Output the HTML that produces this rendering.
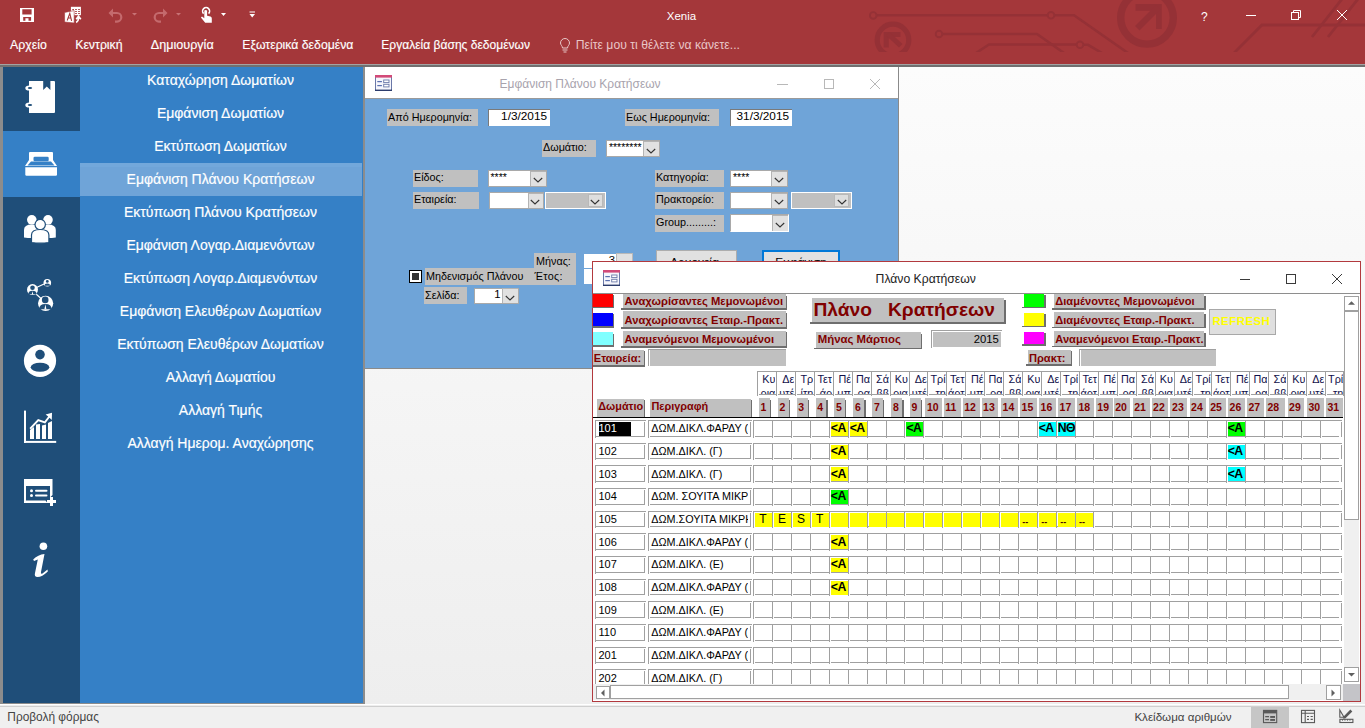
<!DOCTYPE html><html><head><meta charset="utf-8"><style>
html,body{margin:0;padding:0;}
body{width:1365px;height:728px;position:relative;overflow:hidden;background:linear-gradient(to bottom,#fdfdfd 0px,#fcfcfc 67px,#eeeeee 704px,#eeeeee 728px);font-family:"Liberation Sans",sans-serif;}
.t{position:absolute;white-space:nowrap;line-height:1;}
.b{position:absolute;box-sizing:border-box;}
svg{position:absolute;overflow:visible;}
</style></head><body>
<div class="b" style="left:0px;top:0px;width:1365px;height:64px;background:#A4373A"></div>
<svg style="left:0;top:0" width="1365" height="64" viewBox="0 0 1365 64">
<defs><clipPath id="cc"><rect x="0" y="0" width="1365" height="52"/></clipPath></defs>
<g clip-path="url(#cc)">
<g fill="none" stroke="#953136" stroke-width="2.6">
<path d="M876.5 15.3 H1047.5 M1054.5 15.3 H1074 L1128 53"/>
<circle cx="873.2" cy="15.4" r="3.3" stroke-width="1.9"/>
<circle cx="1051" cy="15.3" r="3.3" stroke-width="1.9"/>
<path d="M942.5 34 H1037 L1064 53"/>
<circle cx="939" cy="34" r="3.3" stroke-width="1.9"/>
<path d="M976 53 L989 44.5 H1076.5 M1083.5 44.8 H1088 L1102 53"/>
<circle cx="1080" cy="44.8" r="3.3" stroke-width="1.9"/>
<circle cx="893" cy="40" r="15.8" stroke-width="5.2"/>
<path d="M1234 53 L1262 25 H1365" stroke-width="2.8"/>
<path d="M1312 37 L1342 -1 M1328 37 L1358 -1" stroke-width="2.8"/>
<circle cx="1147" cy="17.8" r="26.3" stroke-width="7.4"/>
</g>
<g fill="#953136">
<path d="M883.7 32 H900.5 V37 H888.8 V47.4 H883.7 Z"/>
<path d="M886 35.5 L889.5 32 L902.5 44 L899 47.5 Z"/>
<path d="M1135.5 4.1 H1161.8 V28.9 H1156 V10.7 H1135.5 Z"/>
<path d="M1135 26 L1156 5 L1160.5 9.5 L1139.5 30.5 Z"/>
</g>
</g>
</svg>
<svg style="left:0;top:0" width="270" height="32" viewBox="0 0 270 32">
<g fill="#fff">
<path d="M20 8 H34 V22 H20 Z M22.3 9.3 V14.5 H31.6 V9.3 Z M23.2 17.1 V20.8 H25.4 V18.3 H28.5 V20.8 H31.1 V17.1 Z" fill-rule="evenodd"/>
</g>
<rect x="70.9" y="6.8" width="10" height="8.4" fill="#fff"/>
<g fill="#A4373A"><rect x="72.3" y="9" width="1.6" height="1"/><rect x="75.2" y="9" width="1.6" height="1"/><rect x="78.2" y="9" width="1.6" height="1"/>
<rect x="72.3" y="11" width="1.6" height="1"/><rect x="75.2" y="11" width="1.6" height="1"/><rect x="78.2" y="11" width="1.6" height="1"/>
<rect x="75.2" y="13" width="1.6" height="1"/><rect x="78.2" y="13" width="1.6" height="1"/></g>
<path d="M64.6 12.4 L74.2 10.6 V23 L64.6 22 Z" fill="#fff" stroke="#A4373A" stroke-width="0.6"/>
<path d="M67.2 20.5 L69.8 13.3 L71.6 20.8 M68.2 18 H71" fill="none" stroke="#A4373A" stroke-width="1.1"/>
<path d="M76.2 22.5 Q78.5 21 78.5 18.5 V17.5 M76.2 19.3 L78.5 16.2 L80.8 19.3" fill="none" stroke="#fff" stroke-width="1.6"/>
<g fill="none" stroke="#c46a6d" stroke-width="2.2">
<path d="M110.5 13 H117 A4.3 4.3 0 0 1 117 21.6 H115"/>
<path d="M165.5 13 H159 A4.3 4.3 0 0 0 159 21.6 H161"/>
</g>
<path d="M108.5 13 L113 8.5 V17.5 Z M167.5 13 L163 8.5 V17.5 Z" fill="#c46a6d"/>
<path d="M132 13 H137 L134.5 15.5 Z M176 13 H181 L178.5 15.5 Z" fill="#c87275"/>
<path d="M221 13 H226 L223.5 16 Z" fill="#fff"/>
<path d="M249.5 11.5 H255 V12.5 H249.5 Z M249.5 14 H255 L252.2 17.5 Z" fill="#fff"/>
<g fill="#fff">
<path d="M203.6 13.6 A3.5 3.5 0 1 1 208.6 13.6" fill="none" stroke="#fff" stroke-width="1.6"/>
<path d="M204.3 10.6 Q205.7 9.4 207.1 10.6 V15.8 L210.5 16.6 Q211.8 17 211.8 18.5 V22.8 H205.2 L200.9 17.6 L202 16.6 L204.3 18.3 Z"/>
</g>
</svg>
<div class="t" style="left:381.50px;width:600px;text-align:center;top:11.37px;font-size:11.5px;color:#fff;font-weight:normal;">Xenia</div>
<svg style="left:1190px;top:0" width="175" height="32" viewBox="1190 0 175 32">
<g stroke="#fff" fill="none" stroke-width="1">
<path d="M1246 15.5 H1256"/>
<rect x="1291.5" y="12.5" width="7" height="7"/>
<path d="M1293.5 12.5 V10.5 H1300.5 V17.5 H1298.5"/>
<path d="M1337 10 L1347 20 M1347 10 L1337 20"/>
</g>
</svg>
<div class="t" style="left:1201.00px;top:10.84px;font-size:12px;color:#fff;font-weight:normal;">?</div>
<div class="t" style="left:10.10px;top:38.89px;font-size:12.3px;color:#fff;font-weight:normal;-webkit-text-stroke:0.15px #fff">Αρχείο</div>
<div class="t" style="left:75.20px;top:38.89px;font-size:12.3px;color:#fff;font-weight:normal;-webkit-text-stroke:0.15px #fff">Κεντρική</div>
<div class="t" style="left:150.80px;top:38.63px;font-size:12.6px;color:#fff;font-weight:normal;-webkit-text-stroke:0.15px #fff">Δημιουργία</div>
<div class="t" style="left:242.30px;top:38.93px;font-size:12.25px;color:#fff;font-weight:normal;-webkit-text-stroke:0.15px #fff">Εξωτερικά δεδομένα</div>
<div class="t" style="left:381.30px;top:39.10px;font-size:12.05px;color:#fff;font-weight:normal;-webkit-text-stroke:0.15px #fff">Εργαλεία βάσης δεδομένων</div>
<svg style="left:555px;top:35px" width="20" height="20" viewBox="555 35 20 20">
<path d="M565 38.5 A4.5 4.5 0 0 1 569.5 43 C569.5 45 567.5 46 567.5 48 H562.5 C562.5 46 560.5 45 560.5 43 A4.5 4.5 0 0 1 565 38.5 Z" fill="none" stroke="#e8c8c8" stroke-width="1"/>
<path d="M562.5 50 H567.5 M563.5 52 H566.5" stroke="#e8c8c8" stroke-width="1"/>
</svg>
<div class="t" style="left:575.80px;top:38.97px;font-size:12.2px;color:#e9c6c7;font-weight:normal;">Πείτε μου τι θέλετε να κάνετε...</div>
<div class="b" style="left:0px;top:64px;width:1365px;height:1px;background:#a3a3a3"></div>
<div class="b" style="left:0px;top:65px;width:1365px;height:2px;background:#707070"></div>
<div class="b" style="left:0px;top:67px;width:3px;height:637px;background:#8c8c8c"></div>
<div class="b" style="left:3px;top:67px;width:77px;height:636px;background:#1F4E79"></div>
<div class="b" style="left:3px;top:131px;width:77px;height:66px;background:#3580C6"></div>
<div class="b" style="left:80px;top:67px;width:283px;height:636px;background:#3580C6"></div>
<div class="b" style="left:80px;top:163px;width:282px;height:33px;background:#6FA4D8"></div>
<div class="b" style="left:80px;top:163px;width:282px;height:4px;background:#73A8DB"></div>
<div class="b" style="left:363px;top:67px;width:2px;height:637px;background:#8c8c8c"></div>
<div class="b" style="left:0px;top:703px;width:365px;height:1px;background:#8c8c8c"></div>
<div class="t" style="left:-79.50px;width:600px;text-align:center;top:72.55px;font-size:14px;color:#fff;font-weight:normal;-webkit-text-stroke:0.18px #fff">Καταχώρηση Δωματίων</div>
<div class="t" style="left:-79.50px;width:600px;text-align:center;top:105.55px;font-size:14px;color:#fff;font-weight:normal;-webkit-text-stroke:0.18px #fff">Εμφάνιση Δωματίων</div>
<div class="t" style="left:-79.50px;width:600px;text-align:center;top:138.55px;font-size:14px;color:#fff;font-weight:normal;-webkit-text-stroke:0.18px #fff">Εκτύπωση Δωματίων</div>
<div class="t" style="left:-79.50px;width:600px;text-align:center;top:171.55px;font-size:14px;color:#fff;font-weight:normal;-webkit-text-stroke:0.18px #fff">Εμφάνιση Πλάνου Κρατήσεων</div>
<div class="t" style="left:-79.50px;width:600px;text-align:center;top:204.55px;font-size:14px;color:#fff;font-weight:normal;-webkit-text-stroke:0.18px #fff">Εκτύπωση Πλάνου Κρατήσεων</div>
<div class="t" style="left:-79.50px;width:600px;text-align:center;top:237.55px;font-size:14px;color:#fff;font-weight:normal;-webkit-text-stroke:0.18px #fff">Εμφάνιση Λογαρ.Διαμενόντων</div>
<div class="t" style="left:-79.50px;width:600px;text-align:center;top:270.55px;font-size:14px;color:#fff;font-weight:normal;-webkit-text-stroke:0.18px #fff">Εκτύπωση Λογαρ.Διαμενόντων</div>
<div class="t" style="left:-79.50px;width:600px;text-align:center;top:303.55px;font-size:14px;color:#fff;font-weight:normal;-webkit-text-stroke:0.18px #fff">Εμφάνιση Ελευθέρων Δωματίων</div>
<div class="t" style="left:-79.50px;width:600px;text-align:center;top:336.55px;font-size:14px;color:#fff;font-weight:normal;-webkit-text-stroke:0.18px #fff">Εκτύπωση Ελευθέρων Δωματίων</div>
<div class="t" style="left:-79.50px;width:600px;text-align:center;top:369.55px;font-size:14px;color:#fff;font-weight:normal;-webkit-text-stroke:0.18px #fff">Αλλαγή Δωματίου</div>
<div class="t" style="left:-79.50px;width:600px;text-align:center;top:402.55px;font-size:14px;color:#fff;font-weight:normal;-webkit-text-stroke:0.18px #fff">Αλλαγή Τιμής</div>
<div class="t" style="left:-79.50px;width:600px;text-align:center;top:435.55px;font-size:14px;color:#fff;font-weight:normal;-webkit-text-stroke:0.18px #fff">Αλλαγή Ημερομ. Αναχώρησης</div>
<svg style="left:0;top:67px" width="80" height="560" viewBox="0 67 80 560">
<g fill="#fff">
<!-- notebook -->
<path fill-rule="evenodd" d="M29 81 H54 Q55 81 55 82 V112 Q55 113 54 113 H29 Z M43.2 81 V90 L46.8 86.5 L50.4 90 V81 Z"/>
<ellipse cx="29.5" cy="88" rx="4.2" ry="2.6"/><ellipse cx="29.5" cy="105" rx="4.2" ry="2.6"/>
</g>
<g fill="#1F4E79"><ellipse cx="30" cy="88" rx="2.2" ry="1"/><ellipse cx="30" cy="105" rx="2.2" ry="1"/></g>
<!-- bed -->
<g fill="#fff">
<path d="M30 152 H52 Q53 152 53 153 V160 L57 166 H25 L29 160 V153 Q29 152 30 152 Z"/>
<path d="M25.3 167.3 H57 V174.5 Q57 175.7 55.8 175.7 H26.5 Q25.3 175.7 25.3 174.5 Z"/>
</g>
<rect x="33.5" y="156.8" width="15.2" height="4.4" rx="1.3" fill="#3580C6"/>
<path d="M31 161.5 H51 L54.5 165.5 H27.5 Z" fill="#3580C6"/>
<!-- people -->
<g fill="#fff">
<circle cx="31.8" cy="219.8" r="4.8"/><circle cx="48" cy="219.8" r="4.8"/>
<path d="M24 237.5 V230 Q24 224.5 31.8 224.5 Q39.6 224.5 39.6 230 V237.5 Q31.8 238.5 24 237.5 Z"/>
<path d="M40.2 237.5 V230 Q40.2 224.5 48 224.5 Q55.8 224.5 55.8 230 V237.5 Q48 238.5 40.2 237.5 Z"/>
</g>
<g fill="#fff" stroke="#1F4E79" stroke-width="1.2">
<circle cx="40.2" cy="224.6" r="5.2"/>
<path d="M31.5 242.5 V235 Q31.5 229.5 40.2 229.5 Q48.9 229.5 48.9 235 V242.5 Q40.2 243.8 31.5 242.5 Z"/>
</g>
<!-- network -->
<g stroke="#fff" stroke-width="1.1"><path d="M36.5 287.5 L44 284 M35.5 293.5 L41 298.5"/></g>
<g fill="#fff"><circle cx="47.3" cy="282.7" r="3.8"/><circle cx="32.5" cy="289.6" r="5.5"/><circle cx="45.6" cy="303.3" r="7.6"/></g>
<g fill="#1F4E79">
<circle cx="47.3" cy="281.4" r="1.4"/><path d="M44.6 285.8 Q44.6 283.5 47.3 283.5 Q50 283.5 50 285.8 Z"/>
<circle cx="32.5" cy="287.8" r="2.3"/><path d="M28.4 294.2 Q28.4 290.8 32.5 290.8 Q36.6 290.8 36.6 294.2 Z"/>
<circle cx="45.2" cy="299.9" r="3.3"/><path d="M39.2 309.2 Q39.2 304 45.4 304 Q51.6 304 51.6 309.2 Z"/>
</g>
<g fill="#fff"><path d="M45.4 304.3 L44.4 309.3 H46.4 Z"/><path d="M32.5 291 L31.8 294.3 H33.2 Z"/></g>
<!-- user -->
<circle cx="40" cy="360.8" r="16.1" fill="#fff"/>
<circle cx="40" cy="354.6" r="4.8" fill="#1F4E79"/>
<ellipse cx="40" cy="367.3" rx="9.3" ry="4.5" fill="#1F4E79"/>
<!-- chart -->
<g fill="#fff">
<rect x="24" y="410.6" width="2" height="32.3"/><rect x="24" y="440.9" width="32.2" height="2"/>
<path d="M30 439 V430 L34 427 V439 Z"/><path d="M36 439 V424.5 L40 424 V439 Z"/><path d="M42 439 V425.5 L46 424.5 V439 Z"/><path d="M48 439 V423 L52 421 V439 Z"/>
<path d="M52 412.7 L51.8 420 L49.5 417.8 L45.2 423.5 L38.5 421.2 L30.8 429.5 L29.5 428 L38 419 L44.5 421.2 L48.2 416.5 L45.6 414.5 Z"/>
</g>
<!-- form plus -->
<g fill="#fff">
<path d="M24 479 H52.5 V495 L50 497.5 V486 H26 V500.5 H45.5 L47.5 503 H24 Z"/>
<circle cx="31.5" cy="490.8" r="1.5"/><circle cx="31.5" cy="495.6" r="1.5"/>
<rect x="35" y="489.8" width="12.5" height="2" rx="1"/><rect x="35" y="494.6" width="12.5" height="2" rx="1"/>
<path d="M50 497 H53 V500 H56 V503 H53 V506 H50 V503 H47 V500 H50 Z"/>
</g>
<!-- info -->
<g fill="#fff">
<circle cx="43.4" cy="546.3" r="3.8"/>
<path d="M33.2 559.5 Q38 554.5 44.5 554 L41 572 Q40.5 574.5 42.5 573.5 L47.5 569.5 L47.8 571.5 Q42 577 37.5 577 Q34 577 35 573 L37.8 559.5 L34 561 Z"/>
</g>
</svg>
<div class="b" style="left:365px;top:67px;width:533px;height:31px;background:#fff"></div>
<div class="b" style="left:365px;top:98px;width:533px;height:1px;background:#9a9a9a"></div>
<div class="b" style="left:365px;top:99px;width:533px;height:269px;background:#6FA4D8"></div>
<div class="b" style="left:898px;top:67px;width:1px;height:302px;background:#8a8a8a"></div>
<div class="b" style="left:365px;top:368px;width:534px;height:1px;background:#8a8a8a"></div>
<svg style="left:375px;top:75px" width="17" height="16" viewBox="0 0 17 16">
<rect x="0.5" y="0.5" width="16" height="15" fill="#f6f6fc" stroke="#6a78a8" stroke-width="1"/>
<rect x="0" y="0" width="17" height="2.6" fill="#d24a78"/>
<rect x="2.3" y="6" width="4.6" height="1.2" fill="#5a70b0"/><rect x="2.3" y="10" width="4.6" height="1.2" fill="#5a70b0"/>
<rect x="8.7" y="5" width="5.3" height="2.6" fill="#fff" stroke="#6a78a8" stroke-width="0.9"/><rect x="8.7" y="9.3" width="5.3" height="2.6" fill="#fff" stroke="#6a78a8" stroke-width="0.9"/>
<rect x="0" y="14.6" width="17" height="1.4" fill="#2c3c6c"/>
</svg>
<div class="t" style="left:499.60px;top:78.44px;font-size:12px;color:#a8a3ad;font-weight:normal;">Εμφάνιση Πλάνου Κρατήσεων</div>
<svg style="left:760px;top:70px" width="130" height="25" viewBox="760 70 130 25">
<g stroke="#b8b8b8" fill="none" stroke-width="1">
<path d="M777 84.5 H788"/>
<rect x="824.5" y="79.5" width="9" height="9"/>
<path d="M870 79 L880 89 M880 79 L870 89"/>
</g></svg>
<div class="b" style="left:387px;top:109px;width:91px;height:17px;background:#C0C0C0"></div>
<div class="t" style="left:388.00px;top:111.56px;font-size:10.8px;color:#000;font-weight:normal;">Από Ημερομηνία:</div>
<div class="b" style="left:488px;top:109px;width:62px;height:17px;background:#fff;border-top:1px solid #7a7a7a;border-left:1px solid #7a7a7a"></div>
<div class="t" style="left:-53.00px;width:600px;text-align:right;top:111.01px;font-size:11.8px;color:#000;font-weight:normal;">1/3/2015</div>
<div class="b" style="left:625px;top:109px;width:94px;height:17px;background:#C0C0C0"></div>
<div class="t" style="left:626.00px;top:111.96px;font-size:10.8px;color:#000;font-weight:normal;">Εως Ημερομηνία:</div>
<div class="b" style="left:730px;top:109px;width:62px;height:17px;background:#fff;border-top:1px solid #7a7a7a;border-left:1px solid #7a7a7a"></div>
<div class="t" style="left:189.00px;width:600px;text-align:right;top:111.01px;font-size:11.8px;color:#000;font-weight:normal;">31/3/2015</div>
<div class="b" style="left:542px;top:140px;width:54px;height:17px;background:#C0C0C0"></div>
<div class="t" style="left:543.00px;top:142.26px;font-size:10.8px;color:#000;font-weight:normal;">Δωμάτιο:</div>
<div class="b" style="left:606px;top:140px;width:54px;height:17px;background:#fff;border:1px solid #a9a9a9"></div>
<div class="b" style="left:643px;top:141px;width:16px;height:15px;background:#e1e1e1;border-left:1px solid #b4b4b4;border-top:1px solid #b4b4b4"></div>
<svg style="left:644.7px;top:146.5px" width="12" height="8" viewBox="0 0 12 8"><path d="M1.8 2 L6 6 L10.2 2" fill="none" stroke="#333" stroke-width="1.1"/></svg>
<div class="t" style="left:608.90px;top:142.21px;font-size:10.5px;color:#000;font-weight:normal;">********</div>
<div class="b" style="left:413px;top:170px;width:65px;height:17px;background:#C0C0C0"></div>
<div class="t" style="left:414.00px;top:172.26px;font-size:10.8px;color:#000;font-weight:normal;">Είδος:</div>
<div class="b" style="left:488px;top:170px;width:59px;height:17px;background:#fff;border:1px solid #a9a9a9"></div>
<div class="b" style="left:530px;top:171px;width:16px;height:15px;background:#e1e1e1;border-left:1px solid #b4b4b4;border-top:1px solid #b4b4b4"></div>
<svg style="left:531.8px;top:176.4px" width="12" height="8" viewBox="0 0 12 8"><path d="M1.8 2 L6 6 L10.2 2" fill="none" stroke="#333" stroke-width="1.1"/></svg>
<div class="t" style="left:490.50px;top:172.21px;font-size:10.5px;color:#000;font-weight:normal;">****</div>
<div class="b" style="left:413px;top:192px;width:66px;height:17px;background:#C0C0C0"></div>
<div class="t" style="left:414.00px;top:194.26px;font-size:10.8px;color:#000;font-weight:normal;">Εταιρεία:</div>
<div class="b" style="left:489px;top:192px;width:55px;height:17px;background:#fff;border:1px solid #a9a9a9"></div>
<div class="b" style="left:528px;top:193px;width:15px;height:15px;background:#e1e1e1;border-left:1px solid #b4b4b4;border-top:1px solid #b4b4b4"></div>
<svg style="left:529.45px;top:198.3px" width="12" height="8" viewBox="0 0 12 8"><path d="M1.8 2 L6 6 L10.2 2" fill="none" stroke="#333" stroke-width="1.1"/></svg>
<div class="b" style="left:545px;top:192px;width:61px;height:17px;background:#fff"></div>
<div class="b" style="left:546px;top:193px;width:59px;height:15px;background:#c0c0c0"></div>
<div class="b" style="left:588px;top:194px;width:15px;height:13px;background:#dedede;border:1px solid #b9b9b9"></div>
<svg style="left:589.3px;top:198.3px" width="12" height="8" viewBox="0 0 12 8"><path d="M1.8 2 L6 6 L10.2 2" fill="none" stroke="#333" stroke-width="1.1"/></svg>
<div class="b" style="left:655px;top:170px;width:69px;height:17px;background:#C0C0C0"></div>
<div class="t" style="left:656.00px;top:172.26px;font-size:10.8px;color:#000;font-weight:normal;">Κατηγορία:</div>
<div class="b" style="left:730px;top:170px;width:58px;height:17px;background:#fff;border:1px solid #a9a9a9"></div>
<div class="b" style="left:771px;top:171px;width:16px;height:15px;background:#e1e1e1;border-left:1px solid #b4b4b4;border-top:1px solid #b4b4b4"></div>
<svg style="left:773.3px;top:176.4px" width="12" height="8" viewBox="0 0 12 8"><path d="M1.8 2 L6 6 L10.2 2" fill="none" stroke="#333" stroke-width="1.1"/></svg>
<div class="t" style="left:733.00px;top:172.21px;font-size:10.5px;color:#000;font-weight:normal;">****</div>
<div class="b" style="left:655px;top:192px;width:69px;height:17px;background:#C0C0C0"></div>
<div class="t" style="left:656.00px;top:194.26px;font-size:10.8px;color:#000;font-weight:normal;">Πρακτορείο:</div>
<div class="b" style="left:730px;top:192px;width:58px;height:17px;background:#fff;border:1px solid #a9a9a9"></div>
<div class="b" style="left:771px;top:193px;width:16px;height:15px;background:#e1e1e1;border-left:1px solid #b4b4b4;border-top:1px solid #b4b4b4"></div>
<svg style="left:773.3px;top:198.3px" width="12" height="8" viewBox="0 0 12 8"><path d="M1.8 2 L6 6 L10.2 2" fill="none" stroke="#333" stroke-width="1.1"/></svg>
<div class="b" style="left:791px;top:192px;width:61px;height:17px;background:#fff"></div>
<div class="b" style="left:792px;top:193px;width:59px;height:15px;background:#c0c0c0"></div>
<div class="b" style="left:834px;top:194px;width:15px;height:13px;background:#dedede;border:1px solid #b9b9b9"></div>
<svg style="left:835.5px;top:198.3px" width="12" height="8" viewBox="0 0 12 8"><path d="M1.8 2 L6 6 L10.2 2" fill="none" stroke="#333" stroke-width="1.1"/></svg>
<div class="b" style="left:655px;top:215px;width:69px;height:17px;background:#C0C0C0"></div>
<div class="t" style="left:656.00px;top:217.26px;font-size:10.8px;color:#000;font-weight:normal;">Group.........:</div>
<div class="b" style="left:730px;top:214px;width:59px;height:18px;background:#fff;border:1px solid #a9a9a9;border-right-color:#fff;border-bottom-color:#fff"></div>
<div class="b" style="left:772px;top:215px;width:16px;height:16px;background:#e1e1e1;border-left:1px solid #b4b4b4;border-top:1px solid #b4b4b4"></div>
<svg style="left:774.0px;top:221.2px" width="12" height="8" viewBox="0 0 12 8"><path d="M1.8 2 L6 6 L10.2 2" fill="none" stroke="#333" stroke-width="1.1"/></svg>
<div class="b" style="left:409px;top:270px;width:13px;height:13px;background:#fff;border:1px solid #000"></div>
<div class="b" style="left:412px;top:273px;width:7px;height:7px;background:#333"></div>
<div class="b" style="left:425px;top:268px;width:110px;height:17px;background:#C0C0C0"></div>
<div class="t" style="left:426.00px;top:271.26px;font-size:10.8px;color:#000;font-weight:normal;">Μηδενισμός Πλάνου</div>
<div class="b" style="left:534px;top:253px;width:42px;height:32px;background:#C0C0C0"></div>
<div class="t" style="left:536.00px;top:256.16px;font-size:10.8px;color:#000;font-weight:normal;">Μήνας:</div>
<div class="t" style="left:534.50px;top:270.66px;font-size:10.8px;color:#000;font-weight:normal;letter-spacing:0.3px">Έτος:</div>
<div class="b" style="left:424px;top:287px;width:43px;height:17px;background:#C0C0C0"></div>
<div class="t" style="left:425.00px;top:290.26px;font-size:10.8px;color:#000;font-weight:normal;">Σελίδα:</div>
<div class="b" style="left:474px;top:288px;width:45px;height:16px;background:#fff;border:1px solid #a9a9a9"></div>
<div class="b" style="left:502px;top:288px;width:16px;height:15px;background:#e1e1e1;border-left:1px solid #b4b4b4;border-top:1px solid #b4b4b4"></div>
<svg style="left:504.4px;top:293.55px" width="12" height="8" viewBox="0 0 12 8"><path d="M1.8 2 L6 6 L10.2 2" fill="none" stroke="#333" stroke-width="1.1"/></svg>
<div class="t" style="left:-99.50px;width:600px;text-align:right;top:289.43px;font-size:11.3px;color:#000;font-weight:normal;">1</div>
<div class="b" style="left:584px;top:254px;width:33px;height:14px;background:#fff"></div>
<div class="b" style="left:616px;top:253px;width:17px;height:16px;background:#e1e1e1;border:1px solid #b9b9b9"></div>
<div class="t" style="left:15.00px;width:600px;text-align:right;top:255.23px;font-size:11.3px;color:#000;font-weight:normal;">3</div>
<div class="b" style="left:584px;top:269px;width:33px;height:15px;background:#fff"></div>
<div class="b" style="left:656px;top:250px;width:81px;height:22px;background:#e1e1e1;border:1px solid #adadad"></div>
<div class="t" style="left:394.50px;width:600px;text-align:center;top:257.01px;font-size:11.8px;color:#000;font-weight:normal;">Αρμονεία</div>
<div class="b" style="left:762px;top:250px;width:78px;height:22px;background:#e1e1e1;border:2px solid #0078d7"></div>
<div class="t" style="left:501.00px;width:600px;text-align:center;top:257.01px;font-size:11.8px;color:#000;font-weight:normal;">Εμφάνιση</div>
<div class="b" style="left:592px;top:261px;width:769px;height:441px;background:#fff;border:1px solid #B2393E"></div>
<div class="b" style="left:593px;top:293px;width:767px;height:1px;background:#8e8e8e"></div>
<svg style="left:603px;top:270px" width="17" height="16" viewBox="0 0 17 16">
<rect x="0.5" y="0.5" width="16" height="15" fill="#f6f6fc" stroke="#6a78a8" stroke-width="1"/>
<rect x="0" y="0" width="17" height="2.6" fill="#d24a78"/>
<rect x="2.3" y="6" width="4.6" height="1.2" fill="#5a70b0"/><rect x="2.3" y="10" width="4.6" height="1.2" fill="#5a70b0"/>
<rect x="8.7" y="5" width="5.3" height="2.6" fill="#fff" stroke="#6a78a8" stroke-width="0.9"/><rect x="8.7" y="9.3" width="5.3" height="2.6" fill="#fff" stroke="#6a78a8" stroke-width="0.9"/>
<rect x="0" y="14.6" width="17" height="1.4" fill="#2c3c6c"/>
</svg>
<div class="t" style="left:875.60px;top:272.77px;font-size:12.2px;color:#222;font-weight:normal;">Πλάνο Κρατήσεων</div>
<svg style="left:1230px;top:265px" width="125" height="25" viewBox="1230 265 125 25">
<g stroke="#3a3a3a" fill="none" stroke-width="1">
<path d="M1240 279.5 H1250"/>
<rect x="1286.5" y="274.5" width="9" height="9"/>
<path d="M1332 274 L1342 284 M1342 274 L1332 284"/>
</g></svg>
<div class="b" style="left:593px;top:294px;width:20px;height:13px;background:#FF0000"></div>
<div class="b" style="left:613px;top:295px;width:1px;height:13px;background:#6e6e6e"></div>
<div class="b" style="left:592px;top:307px;width:22px;height:1px;background:#6e6e6e"></div>
<div class="b" style="left:593px;top:313px;width:20px;height:13px;background:#0000FF"></div>
<div class="b" style="left:613px;top:314px;width:1px;height:14px;background:#6e6e6e"></div>
<div class="b" style="left:592px;top:326px;width:22px;height:2px;background:#6e6e6e"></div>
<div class="b" style="left:593px;top:332px;width:20px;height:13px;background:#80FFFF"></div>
<div class="b" style="left:613px;top:334px;width:1px;height:13px;background:#6e6e6e"></div>
<div class="b" style="left:592px;top:345px;width:22px;height:2px;background:#6e6e6e"></div>
<div class="b" style="left:623px;top:294px;width:163px;height:14px;background:#C0C0C0"></div>
<div class="b" style="left:786px;top:296px;width:1px;height:14px;background:#6e6e6e"></div>
<div class="b" style="left:621px;top:308px;width:166px;height:2px;background:#6e6e6e"></div>
<div class="t" style="left:624.60px;top:296.12px;font-size:11.2px;color:#800000;font-weight:bold;">Αναχωρίσαντες Μεμονωμένοι</div>
<div class="b" style="left:623px;top:311px;width:163px;height:16px;background:#C0C0C0"></div>
<div class="b" style="left:786px;top:313px;width:1px;height:16px;background:#6e6e6e"></div>
<div class="b" style="left:621px;top:327px;width:166px;height:2px;background:#6e6e6e"></div>
<div class="t" style="left:624.60px;top:315.12px;font-size:11.2px;color:#800000;font-weight:bold;">Αναχωρίσαντες Εταιρ.-Πρακτ.</div>
<div class="b" style="left:623px;top:331px;width:163px;height:15px;background:#C0C0C0"></div>
<div class="b" style="left:786px;top:332px;width:1px;height:16px;background:#6e6e6e"></div>
<div class="b" style="left:621px;top:346px;width:166px;height:2px;background:#6e6e6e"></div>
<div class="t" style="left:624.60px;top:334.12px;font-size:11.2px;color:#800000;font-weight:bold;">Αναμενόμενοι Μεμονωμένοι</div>
<div class="b" style="left:593px;top:350px;width:51px;height:15px;background:#C0C0C0"></div>
<div class="b" style="left:644px;top:351px;width:1px;height:16px;background:#6e6e6e"></div>
<div class="b" style="left:593px;top:365px;width:52px;height:2px;background:#6e6e6e"></div>
<div class="t" style="left:593.80px;top:352.69px;font-size:11px;color:#800000;font-weight:bold;">Εταιρεία:</div>
<div class="b" style="left:648px;top:349px;width:138px;height:1px;background:#a0a0a0"></div>
<div class="b" style="left:648px;top:349px;width:1px;height:17px;background:#a0a0a0"></div>
<div class="b" style="left:650px;top:350px;width:136px;height:16px;background:#c0c0c0"></div>
<div class="b" style="left:812px;top:298px;width:192px;height:24px;background:#C0C0C0"></div>
<div class="b" style="left:1004px;top:300px;width:2px;height:24px;background:#6e6e6e"></div>
<div class="b" style="left:810px;top:322px;width:196px;height:2px;background:#6e6e6e"></div>
<div class="t" style="left:813.50px;top:300.35px;font-size:19.2px;color:#800000;font-weight:bold;">Πλάνο&nbsp;&nbsp; Κρατήσεων</div>
<div class="b" style="left:816px;top:332px;width:105px;height:16px;background:#C0C0C0"></div>
<div class="b" style="left:921px;top:334px;width:1px;height:15px;background:#6e6e6e"></div>
<div class="b" style="left:814px;top:348px;width:108px;height:1px;background:#6e6e6e"></div>
<div class="t" style="left:817.70px;top:333.95px;font-size:11.4px;color:#800000;font-weight:bold;">Μήνας Μάρτιος</div>
<div class="b" style="left:931px;top:330px;width:71px;height:1px;background:#a0a0a0"></div>
<div class="b" style="left:931px;top:330px;width:1px;height:18px;background:#a0a0a0"></div>
<div class="b" style="left:933px;top:332px;width:68px;height:15px;background:#c0c0c0"></div>
<div class="t" style="left:398.80px;width:600px;text-align:right;top:334.23px;font-size:11.3px;color:#000;font-weight:normal;">2015</div>
<div class="b" style="left:1024px;top:294px;width:20px;height:13px;background:#00FF00"></div>
<div class="b" style="left:1044px;top:295px;width:2px;height:13px;background:#6e6e6e"></div>
<div class="b" style="left:1022px;top:307px;width:24px;height:1px;background:#6e6e6e"></div>
<div class="b" style="left:1024px;top:313px;width:20px;height:13px;background:#FFFF00"></div>
<div class="b" style="left:1044px;top:314px;width:2px;height:13px;background:#6e6e6e"></div>
<div class="b" style="left:1022px;top:326px;width:24px;height:1px;background:#6e6e6e"></div>
<div class="b" style="left:1024px;top:332px;width:20px;height:12px;background:#FF00FF"></div>
<div class="b" style="left:1044px;top:333px;width:2px;height:13px;background:#6e6e6e"></div>
<div class="b" style="left:1022px;top:344px;width:24px;height:2px;background:#6e6e6e"></div>
<div class="b" style="left:1054px;top:294px;width:150px;height:14px;background:#C0C0C0"></div>
<div class="b" style="left:1204px;top:296px;width:2px;height:14px;background:#6e6e6e"></div>
<div class="b" style="left:1052px;top:308px;width:154px;height:2px;background:#6e6e6e"></div>
<div class="t" style="left:1055.30px;top:296.20px;font-size:11.1px;color:#800000;font-weight:bold;">Διαμένοντες Μεμονωμένοι</div>
<div class="b" style="left:1054px;top:312px;width:150px;height:15px;background:#C0C0C0"></div>
<div class="b" style="left:1204px;top:314px;width:2px;height:14px;background:#6e6e6e"></div>
<div class="b" style="left:1052px;top:327px;width:154px;height:1px;background:#6e6e6e"></div>
<div class="t" style="left:1055.30px;top:314.70px;font-size:11.1px;color:#800000;font-weight:bold;">Διαμένοντες Εταιρ.-Πρακτ.</div>
<div class="b" style="left:1054px;top:331px;width:150px;height:15px;background:#C0C0C0"></div>
<div class="b" style="left:1204px;top:333px;width:2px;height:14px;background:#6e6e6e"></div>
<div class="b" style="left:1052px;top:346px;width:154px;height:1px;background:#6e6e6e"></div>
<div class="t" style="left:1055.30px;top:333.90px;font-size:11.1px;color:#800000;font-weight:bold;">Αναμενόμενοι Εταιρ.-Πρακτ.</div>
<div class="b" style="left:1028px;top:350px;width:43px;height:14px;background:#C0C0C0"></div>
<div class="b" style="left:1071px;top:351px;width:1px;height:15px;background:#6e6e6e"></div>
<div class="b" style="left:1026px;top:364px;width:46px;height:2px;background:#6e6e6e"></div>
<div class="t" style="left:1029.00px;top:352.60px;font-size:11.1px;color:#800000;font-weight:bold;">Πρακτ:</div>
<div class="b" style="left:1079px;top:349px;width:137px;height:1px;background:#a0a0a0"></div>
<div class="b" style="left:1079px;top:349px;width:1px;height:17px;background:#a0a0a0"></div>
<div class="b" style="left:1081px;top:350px;width:135px;height:16px;background:#c0c0c0"></div>
<div class="b" style="left:1209px;top:309px;width:67px;height:26px;background:#dfdfdf;border:1px solid #a8a8a8"></div>
<div class="t" style="left:1212.40px;top:316.35px;font-size:11.4px;color:#FFFF00;font-weight:bold;letter-spacing:0.5px">REFRESH</div>
<div class="b" style="left:757px;top:371px;width:586px;height:1px;background:#a0a0a0"></div>
<div class="b" style="left:757px;top:371px;width:1px;height:25px;background:#a0a0a0"></div>
<div class="b" style="left:759px;top:394px;width:17px;height:1px;background:#a0a0a0"></div>
<div class="t" style="left:760.30px;top:373.1px;width:15px;height:20.7px;overflow:hidden;white-space:normal;word-break:break-all;text-align:right;font-size:10.8px;line-height:13.7px;color:#10104a">Κυριακή</div>
<div class="b" style="left:776px;top:371px;width:1px;height:25px;background:#a0a0a0"></div>
<div class="b" style="left:778px;top:394px;width:17px;height:1px;background:#a0a0a0"></div>
<div class="t" style="left:779.23px;top:373.1px;width:15px;height:20.7px;overflow:hidden;white-space:normal;word-break:break-all;text-align:right;font-size:10.8px;line-height:13.7px;color:#10104a">Δευτέρα</div>
<div class="b" style="left:795px;top:371px;width:1px;height:25px;background:#a0a0a0"></div>
<div class="b" style="left:797px;top:394px;width:17px;height:1px;background:#a0a0a0"></div>
<div class="t" style="left:798.16px;top:373.1px;width:15px;height:20.7px;overflow:hidden;white-space:normal;word-break:break-all;text-align:right;font-size:10.8px;line-height:13.7px;color:#10104a">Τρίτη</div>
<div class="b" style="left:814px;top:371px;width:1px;height:25px;background:#a0a0a0"></div>
<div class="b" style="left:816px;top:394px;width:17px;height:1px;background:#a0a0a0"></div>
<div class="t" style="left:817.09px;top:373.1px;width:15px;height:20.7px;overflow:hidden;white-space:normal;word-break:break-all;text-align:right;font-size:10.8px;line-height:13.7px;color:#10104a">Τετάρτη</div>
<div class="b" style="left:833px;top:371px;width:1px;height:25px;background:#a0a0a0"></div>
<div class="b" style="left:835px;top:394px;width:17px;height:1px;background:#a0a0a0"></div>
<div class="t" style="left:836.02px;top:373.1px;width:15px;height:20.7px;overflow:hidden;white-space:normal;word-break:break-all;text-align:right;font-size:10.8px;line-height:13.7px;color:#10104a">Πέμπτη</div>
<div class="b" style="left:852px;top:371px;width:1px;height:25px;background:#a0a0a0"></div>
<div class="b" style="left:854px;top:394px;width:17px;height:1px;background:#a0a0a0"></div>
<div class="t" style="left:854.95px;top:373.1px;width:15px;height:20.7px;overflow:hidden;white-space:normal;word-break:break-all;text-align:right;font-size:10.8px;line-height:13.7px;color:#10104a">Παρασκευή</div>
<div class="b" style="left:871px;top:371px;width:1px;height:25px;background:#a0a0a0"></div>
<div class="b" style="left:872px;top:394px;width:17px;height:1px;background:#a0a0a0"></div>
<div class="t" style="left:873.88px;top:373.1px;width:15px;height:20.7px;overflow:hidden;white-space:normal;word-break:break-all;text-align:right;font-size:10.8px;line-height:13.7px;color:#10104a">Σάββατο</div>
<div class="b" style="left:890px;top:371px;width:1px;height:25px;background:#a0a0a0"></div>
<div class="b" style="left:891px;top:394px;width:17px;height:1px;background:#a0a0a0"></div>
<div class="t" style="left:892.81px;top:373.1px;width:15px;height:20.7px;overflow:hidden;white-space:normal;word-break:break-all;text-align:right;font-size:10.8px;line-height:13.7px;color:#10104a">Κυριακή</div>
<div class="b" style="left:909px;top:371px;width:1px;height:25px;background:#a0a0a0"></div>
<div class="b" style="left:910px;top:394px;width:17px;height:1px;background:#a0a0a0"></div>
<div class="t" style="left:911.74px;top:373.1px;width:15px;height:20.7px;overflow:hidden;white-space:normal;word-break:break-all;text-align:right;font-size:10.8px;line-height:13.7px;color:#10104a">Δευτέρα</div>
<div class="b" style="left:927px;top:371px;width:1px;height:25px;background:#a0a0a0"></div>
<div class="b" style="left:929px;top:394px;width:17px;height:1px;background:#a0a0a0"></div>
<div class="t" style="left:928.37px;top:373.1px;width:17.3px;height:20.7px;overflow:hidden;white-space:normal;word-break:break-all;text-align:right;font-size:10.8px;line-height:13.7px;color:#10104a">Τρίτη</div>
<div class="b" style="left:946px;top:371px;width:1px;height:25px;background:#a0a0a0"></div>
<div class="b" style="left:948px;top:394px;width:17px;height:1px;background:#a0a0a0"></div>
<div class="t" style="left:947.30px;top:373.1px;width:17.3px;height:20.7px;overflow:hidden;white-space:normal;word-break:break-all;text-align:right;font-size:10.8px;line-height:13.7px;color:#10104a">Τετάρτη</div>
<div class="b" style="left:965px;top:371px;width:1px;height:25px;background:#a0a0a0"></div>
<div class="b" style="left:967px;top:394px;width:17px;height:1px;background:#a0a0a0"></div>
<div class="t" style="left:966.23px;top:373.1px;width:17.3px;height:20.7px;overflow:hidden;white-space:normal;word-break:break-all;text-align:right;font-size:10.8px;line-height:13.7px;color:#10104a">Πέμπτη</div>
<div class="b" style="left:984px;top:371px;width:1px;height:25px;background:#a0a0a0"></div>
<div class="b" style="left:986px;top:394px;width:17px;height:1px;background:#a0a0a0"></div>
<div class="t" style="left:985.16px;top:373.1px;width:17.3px;height:20.7px;overflow:hidden;white-space:normal;word-break:break-all;text-align:right;font-size:10.8px;line-height:13.7px;color:#10104a">Παρασκευή</div>
<div class="b" style="left:1003px;top:371px;width:1px;height:25px;background:#a0a0a0"></div>
<div class="b" style="left:1005px;top:394px;width:17px;height:1px;background:#a0a0a0"></div>
<div class="t" style="left:1004.09px;top:373.1px;width:17.3px;height:20.7px;overflow:hidden;white-space:normal;word-break:break-all;text-align:right;font-size:10.8px;line-height:13.7px;color:#10104a">Σάββατο</div>
<div class="b" style="left:1022px;top:371px;width:1px;height:25px;background:#a0a0a0"></div>
<div class="b" style="left:1024px;top:394px;width:17px;height:1px;background:#a0a0a0"></div>
<div class="t" style="left:1023.02px;top:373.1px;width:17.3px;height:20.7px;overflow:hidden;white-space:normal;word-break:break-all;text-align:right;font-size:10.8px;line-height:13.7px;color:#10104a">Κυριακή</div>
<div class="b" style="left:1041px;top:371px;width:1px;height:25px;background:#a0a0a0"></div>
<div class="b" style="left:1043px;top:394px;width:17px;height:1px;background:#a0a0a0"></div>
<div class="t" style="left:1041.95px;top:373.1px;width:17.3px;height:20.7px;overflow:hidden;white-space:normal;word-break:break-all;text-align:right;font-size:10.8px;line-height:13.7px;color:#10104a">Δευτέρα</div>
<div class="b" style="left:1060px;top:371px;width:1px;height:25px;background:#a0a0a0"></div>
<div class="b" style="left:1062px;top:394px;width:17px;height:1px;background:#a0a0a0"></div>
<div class="t" style="left:1060.88px;top:373.1px;width:17.3px;height:20.7px;overflow:hidden;white-space:normal;word-break:break-all;text-align:right;font-size:10.8px;line-height:13.7px;color:#10104a">Τρίτη</div>
<div class="b" style="left:1079px;top:371px;width:1px;height:25px;background:#a0a0a0"></div>
<div class="b" style="left:1081px;top:394px;width:17px;height:1px;background:#a0a0a0"></div>
<div class="t" style="left:1079.81px;top:373.1px;width:17.3px;height:20.7px;overflow:hidden;white-space:normal;word-break:break-all;text-align:right;font-size:10.8px;line-height:13.7px;color:#10104a">Τετάρτη</div>
<div class="b" style="left:1098px;top:371px;width:1px;height:25px;background:#a0a0a0"></div>
<div class="b" style="left:1100px;top:394px;width:17px;height:1px;background:#a0a0a0"></div>
<div class="t" style="left:1098.74px;top:373.1px;width:17.3px;height:20.7px;overflow:hidden;white-space:normal;word-break:break-all;text-align:right;font-size:10.8px;line-height:13.7px;color:#10104a">Πέμπτη</div>
<div class="b" style="left:1117px;top:371px;width:1px;height:25px;background:#a0a0a0"></div>
<div class="b" style="left:1119px;top:394px;width:17px;height:1px;background:#a0a0a0"></div>
<div class="t" style="left:1117.67px;top:373.1px;width:17.3px;height:20.7px;overflow:hidden;white-space:normal;word-break:break-all;text-align:right;font-size:10.8px;line-height:13.7px;color:#10104a">Παρασκευή</div>
<div class="b" style="left:1136px;top:371px;width:1px;height:25px;background:#a0a0a0"></div>
<div class="b" style="left:1138px;top:394px;width:16px;height:1px;background:#a0a0a0"></div>
<div class="t" style="left:1136.60px;top:373.1px;width:17.3px;height:20.7px;overflow:hidden;white-space:normal;word-break:break-all;text-align:right;font-size:10.8px;line-height:13.7px;color:#10104a">Σάββατο</div>
<div class="b" style="left:1155px;top:371px;width:1px;height:25px;background:#a0a0a0"></div>
<div class="b" style="left:1156px;top:394px;width:17px;height:1px;background:#a0a0a0"></div>
<div class="t" style="left:1155.53px;top:373.1px;width:17.3px;height:20.7px;overflow:hidden;white-space:normal;word-break:break-all;text-align:right;font-size:10.8px;line-height:13.7px;color:#10104a">Κυριακή</div>
<div class="b" style="left:1174px;top:371px;width:1px;height:25px;background:#a0a0a0"></div>
<div class="b" style="left:1175px;top:394px;width:17px;height:1px;background:#a0a0a0"></div>
<div class="t" style="left:1174.46px;top:373.1px;width:17.3px;height:20.7px;overflow:hidden;white-space:normal;word-break:break-all;text-align:right;font-size:10.8px;line-height:13.7px;color:#10104a">Δευτέρα</div>
<div class="b" style="left:1192px;top:371px;width:1px;height:25px;background:#a0a0a0"></div>
<div class="b" style="left:1194px;top:394px;width:17px;height:1px;background:#a0a0a0"></div>
<div class="t" style="left:1193.39px;top:373.1px;width:17.3px;height:20.7px;overflow:hidden;white-space:normal;word-break:break-all;text-align:right;font-size:10.8px;line-height:13.7px;color:#10104a">Τρίτη</div>
<div class="b" style="left:1211px;top:371px;width:1px;height:25px;background:#a0a0a0"></div>
<div class="b" style="left:1213px;top:394px;width:17px;height:1px;background:#a0a0a0"></div>
<div class="t" style="left:1212.32px;top:373.1px;width:17.3px;height:20.7px;overflow:hidden;white-space:normal;word-break:break-all;text-align:right;font-size:10.8px;line-height:13.7px;color:#10104a">Τετάρτη</div>
<div class="b" style="left:1230px;top:371px;width:1px;height:25px;background:#a0a0a0"></div>
<div class="b" style="left:1232px;top:394px;width:17px;height:1px;background:#a0a0a0"></div>
<div class="t" style="left:1231.25px;top:373.1px;width:17.3px;height:20.7px;overflow:hidden;white-space:normal;word-break:break-all;text-align:right;font-size:10.8px;line-height:13.7px;color:#10104a">Πέμπτη</div>
<div class="b" style="left:1249px;top:371px;width:1px;height:25px;background:#a0a0a0"></div>
<div class="b" style="left:1251px;top:394px;width:17px;height:1px;background:#a0a0a0"></div>
<div class="t" style="left:1250.18px;top:373.1px;width:17.3px;height:20.7px;overflow:hidden;white-space:normal;word-break:break-all;text-align:right;font-size:10.8px;line-height:13.7px;color:#10104a">Παρασκευή</div>
<div class="b" style="left:1268px;top:371px;width:1px;height:25px;background:#a0a0a0"></div>
<div class="b" style="left:1270px;top:394px;width:17px;height:1px;background:#a0a0a0"></div>
<div class="t" style="left:1269.11px;top:373.1px;width:17.3px;height:20.7px;overflow:hidden;white-space:normal;word-break:break-all;text-align:right;font-size:10.8px;line-height:13.7px;color:#10104a">Σάββατο</div>
<div class="b" style="left:1287px;top:371px;width:1px;height:25px;background:#a0a0a0"></div>
<div class="b" style="left:1289px;top:394px;width:17px;height:1px;background:#a0a0a0"></div>
<div class="t" style="left:1288.04px;top:373.1px;width:17.3px;height:20.7px;overflow:hidden;white-space:normal;word-break:break-all;text-align:right;font-size:10.8px;line-height:13.7px;color:#10104a">Κυριακή</div>
<div class="b" style="left:1306px;top:371px;width:1px;height:25px;background:#a0a0a0"></div>
<div class="b" style="left:1308px;top:394px;width:17px;height:1px;background:#a0a0a0"></div>
<div class="t" style="left:1306.97px;top:373.1px;width:17.3px;height:20.7px;overflow:hidden;white-space:normal;word-break:break-all;text-align:right;font-size:10.8px;line-height:13.7px;color:#10104a">Δευτέρα</div>
<div class="b" style="left:1325px;top:371px;width:1px;height:25px;background:#a0a0a0"></div>
<div class="b" style="left:1327px;top:394px;width:17px;height:1px;background:#a0a0a0"></div>
<div class="t" style="left:1325.90px;top:373.1px;width:17.3px;height:20.7px;overflow:hidden;white-space:normal;word-break:break-all;text-align:right;font-size:10.8px;line-height:13.7px;color:#10104a">Τρίτη</div>
<div class="b" style="left:1343px;top:371px;width:1px;height:25px;background:#a0a0a0"></div>
<div class="b" style="left:597px;top:399px;width:47px;height:18px;background:#C0C0C0"></div>
<div class="b" style="left:644px;top:400px;width:1px;height:18px;background:#6e6e6e"></div>
<div class="b" style="left:597px;top:417px;width:48px;height:1px;background:#6e6e6e"></div>
<div class="t" style="left:598.20px;top:401.27px;font-size:10.9px;color:#800000;font-weight:bold;">Δωμάτιο</div>
<div class="b" style="left:650px;top:399px;width:101px;height:18px;background:#C0C0C0"></div>
<div class="b" style="left:751px;top:400px;width:1px;height:18px;background:#6e6e6e"></div>
<div class="b" style="left:650px;top:417px;width:102px;height:1px;background:#6e6e6e"></div>
<div class="t" style="left:651.50px;top:401.27px;font-size:10.9px;color:#800000;font-weight:bold;">Περιγραφή</div>
<div class="b" style="left:759px;top:398px;width:11px;height:19px;background:#C0C0C0"></div>
<div class="b" style="left:770px;top:400px;width:1px;height:18px;background:#6e6e6e"></div>
<div class="b" style="left:759px;top:417px;width:12px;height:1px;background:#6e6e6e"></div>
<div class="t" style="left:463.40px;width:600px;text-align:center;top:401.71px;font-size:10.5px;color:#800000;font-weight:bold;">1</div>
<div class="b" style="left:778px;top:398px;width:11px;height:19px;background:#C0C0C0"></div>
<div class="b" style="left:789px;top:400px;width:1px;height:18px;background:#6e6e6e"></div>
<div class="b" style="left:778px;top:417px;width:12px;height:1px;background:#6e6e6e"></div>
<div class="t" style="left:482.30px;width:600px;text-align:center;top:401.71px;font-size:10.5px;color:#800000;font-weight:bold;">2</div>
<div class="b" style="left:797px;top:398px;width:11px;height:19px;background:#C0C0C0"></div>
<div class="b" style="left:808px;top:400px;width:1px;height:18px;background:#6e6e6e"></div>
<div class="b" style="left:797px;top:417px;width:12px;height:1px;background:#6e6e6e"></div>
<div class="t" style="left:501.20px;width:600px;text-align:center;top:401.71px;font-size:10.5px;color:#800000;font-weight:bold;">3</div>
<div class="b" style="left:816px;top:398px;width:10px;height:19px;background:#C0C0C0"></div>
<div class="b" style="left:826px;top:400px;width:2px;height:18px;background:#6e6e6e"></div>
<div class="b" style="left:816px;top:417px;width:12px;height:1px;background:#6e6e6e"></div>
<div class="t" style="left:520.10px;width:600px;text-align:center;top:401.71px;font-size:10.5px;color:#800000;font-weight:bold;">4</div>
<div class="b" style="left:834px;top:398px;width:11px;height:19px;background:#C0C0C0"></div>
<div class="b" style="left:845px;top:400px;width:1px;height:18px;background:#6e6e6e"></div>
<div class="b" style="left:834px;top:417px;width:12px;height:1px;background:#6e6e6e"></div>
<div class="t" style="left:539.00px;width:600px;text-align:center;top:401.71px;font-size:10.5px;color:#800000;font-weight:bold;">5</div>
<div class="b" style="left:853px;top:398px;width:11px;height:19px;background:#C0C0C0"></div>
<div class="b" style="left:864px;top:400px;width:2px;height:18px;background:#6e6e6e"></div>
<div class="b" style="left:853px;top:417px;width:13px;height:1px;background:#6e6e6e"></div>
<div class="t" style="left:558.00px;width:600px;text-align:center;top:401.71px;font-size:10.5px;color:#800000;font-weight:bold;">6</div>
<div class="b" style="left:872px;top:398px;width:11px;height:19px;background:#C0C0C0"></div>
<div class="b" style="left:883px;top:400px;width:1px;height:18px;background:#6e6e6e"></div>
<div class="b" style="left:872px;top:417px;width:12px;height:1px;background:#6e6e6e"></div>
<div class="t" style="left:576.90px;width:600px;text-align:center;top:401.71px;font-size:10.5px;color:#800000;font-weight:bold;">7</div>
<div class="b" style="left:891px;top:398px;width:11px;height:19px;background:#C0C0C0"></div>
<div class="b" style="left:902px;top:400px;width:2px;height:18px;background:#6e6e6e"></div>
<div class="b" style="left:891px;top:417px;width:13px;height:1px;background:#6e6e6e"></div>
<div class="t" style="left:596.00px;width:600px;text-align:center;top:401.71px;font-size:10.5px;color:#800000;font-weight:bold;">8</div>
<div class="b" style="left:910px;top:398px;width:11px;height:19px;background:#C0C0C0"></div>
<div class="b" style="left:921px;top:400px;width:1px;height:18px;background:#6e6e6e"></div>
<div class="b" style="left:910px;top:417px;width:12px;height:1px;background:#6e6e6e"></div>
<div class="t" style="left:614.50px;width:600px;text-align:center;top:401.71px;font-size:10.5px;color:#800000;font-weight:bold;">9</div>
<div class="b" style="left:925px;top:398px;width:17px;height:19px;background:#C0C0C0"></div>
<div class="t" style="left:927.00px;top:401.71px;font-size:10.5px;color:#800000;font-weight:bold;">10</div>
<div class="b" style="left:944px;top:398px;width:17px;height:19px;background:#C0C0C0"></div>
<div class="t" style="left:945.30px;top:401.71px;font-size:10.5px;color:#800000;font-weight:bold;">11</div>
<div class="b" style="left:963px;top:398px;width:17px;height:19px;background:#C0C0C0"></div>
<div class="t" style="left:964.20px;top:401.71px;font-size:10.5px;color:#800000;font-weight:bold;">12</div>
<div class="b" style="left:982px;top:398px;width:16px;height:19px;background:#C0C0C0"></div>
<div class="t" style="left:983.10px;top:401.71px;font-size:10.5px;color:#800000;font-weight:bold;">13</div>
<div class="b" style="left:1001px;top:398px;width:17px;height:19px;background:#C0C0C0"></div>
<div class="t" style="left:1002.60px;top:401.71px;font-size:10.5px;color:#800000;font-weight:bold;">14</div>
<div class="b" style="left:1020px;top:398px;width:17px;height:19px;background:#C0C0C0"></div>
<div class="t" style="left:1021.60px;top:401.71px;font-size:10.5px;color:#800000;font-weight:bold;">15</div>
<div class="b" style="left:1039px;top:398px;width:17px;height:19px;background:#C0C0C0"></div>
<div class="t" style="left:1040.60px;top:401.71px;font-size:10.5px;color:#800000;font-weight:bold;">16</div>
<div class="b" style="left:1058px;top:398px;width:17px;height:19px;background:#C0C0C0"></div>
<div class="t" style="left:1059.60px;top:401.71px;font-size:10.5px;color:#800000;font-weight:bold;">17</div>
<div class="b" style="left:1077px;top:398px;width:17px;height:19px;background:#C0C0C0"></div>
<div class="t" style="left:1078.50px;top:401.71px;font-size:10.5px;color:#800000;font-weight:bold;">18</div>
<div class="b" style="left:1096px;top:398px;width:17px;height:19px;background:#C0C0C0"></div>
<div class="t" style="left:1097.30px;top:401.71px;font-size:10.5px;color:#800000;font-weight:bold;">19</div>
<div class="b" style="left:1114px;top:398px;width:16px;height:19px;background:#C0C0C0"></div>
<div class="t" style="left:1115.20px;top:401.71px;font-size:10.5px;color:#800000;font-weight:bold;">20</div>
<div class="b" style="left:1133px;top:398px;width:17px;height:19px;background:#C0C0C0"></div>
<div class="t" style="left:1134.20px;top:401.71px;font-size:10.5px;color:#800000;font-weight:bold;">21</div>
<div class="b" style="left:1152px;top:398px;width:16px;height:19px;background:#C0C0C0"></div>
<div class="t" style="left:1153.10px;top:401.71px;font-size:10.5px;color:#800000;font-weight:bold;">22</div>
<div class="b" style="left:1170px;top:398px;width:17px;height:19px;background:#C0C0C0"></div>
<div class="t" style="left:1172.10px;top:401.71px;font-size:10.5px;color:#800000;font-weight:bold;">23</div>
<div class="b" style="left:1190px;top:398px;width:16px;height:19px;background:#C0C0C0"></div>
<div class="t" style="left:1191.10px;top:401.71px;font-size:10.5px;color:#800000;font-weight:bold;">24</div>
<div class="b" style="left:1209px;top:398px;width:17px;height:19px;background:#C0C0C0"></div>
<div class="t" style="left:1210.20px;top:401.71px;font-size:10.5px;color:#800000;font-weight:bold;">25</div>
<div class="b" style="left:1228px;top:398px;width:17px;height:19px;background:#C0C0C0"></div>
<div class="t" style="left:1229.60px;top:401.71px;font-size:10.5px;color:#800000;font-weight:bold;">26</div>
<div class="b" style="left:1247px;top:398px;width:17px;height:19px;background:#C0C0C0"></div>
<div class="t" style="left:1248.40px;top:401.71px;font-size:10.5px;color:#800000;font-weight:bold;">27</div>
<div class="b" style="left:1266px;top:398px;width:19px;height:19px;background:#C0C0C0"></div>
<div class="t" style="left:1267.40px;top:401.71px;font-size:10.5px;color:#800000;font-weight:bold;">28</div>
<div class="b" style="left:1288px;top:398px;width:16px;height:19px;background:#C0C0C0"></div>
<div class="t" style="left:1289.10px;top:401.71px;font-size:10.5px;color:#800000;font-weight:bold;">29</div>
<div class="b" style="left:1307px;top:398px;width:17px;height:19px;background:#C0C0C0"></div>
<div class="t" style="left:1308.50px;top:401.71px;font-size:10.5px;color:#800000;font-weight:bold;">30</div>
<div class="b" style="left:1326px;top:398px;width:17px;height:19px;background:#C0C0C0"></div>
<div class="t" style="left:1327.40px;top:401.71px;font-size:10.5px;color:#800000;font-weight:bold;">31</div>
<div class="b" style="left:593px;top:417px;width:750px;height:1px;background:#000"></div>
<div style="position:absolute;left:593px;top:418.4px;width:751px;height:266.6px;overflow:hidden">
<div class="b" style="left:2.00px;top:1.60px;width:51px;height:1px;background:#a0a0a0"></div>
<div class="b" style="left:2.00px;top:1.60px;width:1px;height:18px;background:#a0a0a0"></div>
<div class="b" style="left:51.00px;top:3.60px;width:1px;height:15px;background:#a0a0a0"></div>
<div class="b" style="left:3.00px;top:17.60px;width:49px;height:1px;background:#a0a0a0"></div>
<div class="b" style="left:6.00px;top:3.60px;width:32px;height:14px;background:#000"></div>
<div class="t" style="left:5.50px;top:5.09px;font-size:11px;color:#fff;font-weight:normal;">101</div>
<div class="b" style="left:55.00px;top:1.60px;width:104px;height:1px;background:#a0a0a0"></div>
<div class="b" style="left:55.00px;top:1.60px;width:1px;height:18px;background:#a0a0a0"></div>
<div class="b" style="left:157.00px;top:3.60px;width:1px;height:15px;background:#a0a0a0"></div>
<div class="b" style="left:57.00px;top:17.60px;width:101px;height:1px;background:#a0a0a0"></div>
<div class="t" style="left:58.299999999999955px;top:4.99px;width:97px;overflow:hidden;font-size:10.8px;color:#000">ΔΩΜ.ΔΙΚΛ.ΦΑΡΔΥ (ΔΙΠΛΟ)</div>
<div class="b" style="left:160.00px;top:1.60px;width:589px;height:1px;background:#a0a0a0"></div>
<div class="b" style="left:160.00px;top:1.60px;width:1px;height:18px;background:#a0a0a0"></div>
<div class="b" style="left:162.00px;top:17.60px;width:17px;height:1px;background:#a0a0a0"></div>
<div class="b" style="left:179.00px;top:1.60px;width:1px;height:18px;background:#a0a0a0"></div>
<div class="b" style="left:181.00px;top:17.60px;width:17px;height:1px;background:#a0a0a0"></div>
<div class="b" style="left:198.00px;top:1.60px;width:1px;height:18px;background:#a0a0a0"></div>
<div class="b" style="left:200.00px;top:17.60px;width:17px;height:1px;background:#a0a0a0"></div>
<div class="b" style="left:217.00px;top:1.60px;width:1px;height:18px;background:#a0a0a0"></div>
<div class="b" style="left:219.00px;top:17.60px;width:17px;height:1px;background:#a0a0a0"></div>
<div class="b" style="left:236.00px;top:1.60px;width:1px;height:18px;background:#a0a0a0"></div>
<div class="b" style="left:238.00px;top:17.60px;width:17px;height:1px;background:#a0a0a0"></div>
<div class="b" style="left:238.00px;top:3.60px;width:17px;height:14px;background:#FFFF00"></div>
<div class="t" style="left:237.81px;top:4.09px;font-size:12.3px;color:#000;font-weight:bold;letter-spacing:-0.6px">&lt;A</div>
<div class="b" style="left:255.00px;top:1.60px;width:1px;height:18px;background:#a0a0a0"></div>
<div class="b" style="left:257.00px;top:17.60px;width:17px;height:1px;background:#a0a0a0"></div>
<div class="b" style="left:257.00px;top:3.60px;width:17px;height:14px;background:#FFFF00"></div>
<div class="t" style="left:256.72px;top:4.09px;font-size:12.3px;color:#000;font-weight:bold;letter-spacing:-0.6px">&lt;A</div>
<div class="b" style="left:274.00px;top:1.60px;width:1px;height:18px;background:#a0a0a0"></div>
<div class="b" style="left:275.00px;top:17.60px;width:18px;height:1px;background:#a0a0a0"></div>
<div class="b" style="left:293.00px;top:1.60px;width:1px;height:18px;background:#a0a0a0"></div>
<div class="b" style="left:294.00px;top:17.60px;width:18px;height:1px;background:#a0a0a0"></div>
<div class="b" style="left:311.00px;top:1.60px;width:1px;height:18px;background:#a0a0a0"></div>
<div class="b" style="left:313.00px;top:17.60px;width:17px;height:1px;background:#a0a0a0"></div>
<div class="b" style="left:313.00px;top:3.60px;width:17px;height:14px;background:#00FF00"></div>
<div class="t" style="left:313.42px;top:4.09px;font-size:12.3px;color:#000;font-weight:bold;letter-spacing:-0.6px">&lt;A</div>
<div class="b" style="left:330.00px;top:1.60px;width:1px;height:18px;background:#a0a0a0"></div>
<div class="b" style="left:332.00px;top:17.60px;width:17px;height:1px;background:#a0a0a0"></div>
<div class="b" style="left:349.00px;top:1.60px;width:1px;height:18px;background:#a0a0a0"></div>
<div class="b" style="left:351.00px;top:17.60px;width:17px;height:1px;background:#a0a0a0"></div>
<div class="b" style="left:368.00px;top:1.60px;width:1px;height:18px;background:#a0a0a0"></div>
<div class="b" style="left:370.00px;top:17.60px;width:17px;height:1px;background:#a0a0a0"></div>
<div class="b" style="left:387.00px;top:1.60px;width:1px;height:18px;background:#a0a0a0"></div>
<div class="b" style="left:389.00px;top:17.60px;width:17px;height:1px;background:#a0a0a0"></div>
<div class="b" style="left:406.00px;top:1.60px;width:1px;height:18px;background:#a0a0a0"></div>
<div class="b" style="left:408.00px;top:17.60px;width:17px;height:1px;background:#a0a0a0"></div>
<div class="b" style="left:425.00px;top:1.60px;width:1px;height:18px;background:#a0a0a0"></div>
<div class="b" style="left:427.00px;top:17.60px;width:17px;height:1px;background:#a0a0a0"></div>
<div class="b" style="left:444.00px;top:1.60px;width:1px;height:18px;background:#a0a0a0"></div>
<div class="b" style="left:446.00px;top:17.60px;width:17px;height:1px;background:#a0a0a0"></div>
<div class="b" style="left:446.00px;top:3.60px;width:17px;height:14px;background:#00FFFF"></div>
<div class="t" style="left:445.74px;top:4.09px;font-size:12.3px;color:#000;font-weight:bold;letter-spacing:-0.6px">&lt;A</div>
<div class="b" style="left:463.00px;top:1.60px;width:1px;height:18px;background:#a0a0a0"></div>
<div class="b" style="left:464.00px;top:17.60px;width:18px;height:1px;background:#a0a0a0"></div>
<div class="b" style="left:465.00px;top:3.60px;width:17px;height:14px;background:#00FFFF"></div>
<div class="t" style="left:464.65px;top:4.09px;font-size:12.3px;color:#000;font-weight:bold;letter-spacing:-0.6px">ΝΘ</div>
<div class="b" style="left:482.00px;top:1.60px;width:1px;height:18px;background:#a0a0a0"></div>
<div class="b" style="left:483.00px;top:17.60px;width:18px;height:1px;background:#a0a0a0"></div>
<div class="b" style="left:500.00px;top:1.60px;width:1px;height:18px;background:#a0a0a0"></div>
<div class="b" style="left:502.00px;top:17.60px;width:17px;height:1px;background:#a0a0a0"></div>
<div class="b" style="left:519.00px;top:1.60px;width:1px;height:18px;background:#a0a0a0"></div>
<div class="b" style="left:521.00px;top:17.60px;width:17px;height:1px;background:#a0a0a0"></div>
<div class="b" style="left:538.00px;top:1.60px;width:1px;height:18px;background:#a0a0a0"></div>
<div class="b" style="left:540.00px;top:17.60px;width:17px;height:1px;background:#a0a0a0"></div>
<div class="b" style="left:557.00px;top:1.60px;width:1px;height:18px;background:#a0a0a0"></div>
<div class="b" style="left:559.00px;top:17.60px;width:17px;height:1px;background:#a0a0a0"></div>
<div class="b" style="left:576.00px;top:1.60px;width:1px;height:18px;background:#a0a0a0"></div>
<div class="b" style="left:578.00px;top:17.60px;width:17px;height:1px;background:#a0a0a0"></div>
<div class="b" style="left:595.00px;top:1.60px;width:1px;height:18px;background:#a0a0a0"></div>
<div class="b" style="left:597.00px;top:17.60px;width:17px;height:1px;background:#a0a0a0"></div>
<div class="b" style="left:614.00px;top:1.60px;width:1px;height:18px;background:#a0a0a0"></div>
<div class="b" style="left:616.00px;top:17.60px;width:17px;height:1px;background:#a0a0a0"></div>
<div class="b" style="left:633.00px;top:1.60px;width:1px;height:18px;background:#a0a0a0"></div>
<div class="b" style="left:635.00px;top:17.60px;width:17px;height:1px;background:#a0a0a0"></div>
<div class="b" style="left:635.00px;top:3.60px;width:17px;height:14px;background:#00FF00"></div>
<div class="t" style="left:634.78px;top:4.09px;font-size:12.3px;color:#000;font-weight:bold;letter-spacing:-0.6px">&lt;A</div>
<div class="b" style="left:652.00px;top:1.60px;width:1px;height:18px;background:#a0a0a0"></div>
<div class="b" style="left:653.00px;top:17.60px;width:18px;height:1px;background:#a0a0a0"></div>
<div class="b" style="left:671.00px;top:1.60px;width:1px;height:18px;background:#a0a0a0"></div>
<div class="b" style="left:672.00px;top:17.60px;width:18px;height:1px;background:#a0a0a0"></div>
<div class="b" style="left:689.00px;top:1.60px;width:1px;height:18px;background:#a0a0a0"></div>
<div class="b" style="left:691.00px;top:17.60px;width:17px;height:1px;background:#a0a0a0"></div>
<div class="b" style="left:708.00px;top:1.60px;width:1px;height:18px;background:#a0a0a0"></div>
<div class="b" style="left:710.00px;top:17.60px;width:17px;height:1px;background:#a0a0a0"></div>
<div class="b" style="left:727.00px;top:1.60px;width:1px;height:18px;background:#a0a0a0"></div>
<div class="b" style="left:729.00px;top:17.60px;width:17px;height:1px;background:#a0a0a0"></div>
<div class="b" style="left:748.00px;top:3.60px;width:1px;height:15px;background:#a0a0a0"></div>
<div class="b" style="left:2.00px;top:24.60px;width:51px;height:1px;background:#a0a0a0"></div>
<div class="b" style="left:2.00px;top:24.60px;width:1px;height:17px;background:#a0a0a0"></div>
<div class="b" style="left:51.00px;top:26.60px;width:1px;height:14px;background:#a0a0a0"></div>
<div class="b" style="left:3.00px;top:39.60px;width:49px;height:1px;background:#a0a0a0"></div>
<div class="t" style="left:5.50px;top:27.76px;font-size:11px;color:#000;font-weight:normal;">102</div>
<div class="b" style="left:55.00px;top:24.60px;width:104px;height:1px;background:#a0a0a0"></div>
<div class="b" style="left:55.00px;top:24.60px;width:1px;height:17px;background:#a0a0a0"></div>
<div class="b" style="left:157.00px;top:26.60px;width:1px;height:14px;background:#a0a0a0"></div>
<div class="b" style="left:57.00px;top:39.60px;width:101px;height:1px;background:#a0a0a0"></div>
<div class="t" style="left:58.299999999999955px;top:27.66px;width:97px;overflow:hidden;font-size:10.8px;color:#000">ΔΩΜ.ΔΙΚΛ. (Γ)</div>
<div class="b" style="left:160.00px;top:24.60px;width:589px;height:1px;background:#a0a0a0"></div>
<div class="b" style="left:160.00px;top:24.60px;width:1px;height:17px;background:#a0a0a0"></div>
<div class="b" style="left:162.00px;top:39.60px;width:17px;height:1px;background:#a0a0a0"></div>
<div class="b" style="left:179.00px;top:24.60px;width:1px;height:17px;background:#a0a0a0"></div>
<div class="b" style="left:181.00px;top:39.60px;width:17px;height:1px;background:#a0a0a0"></div>
<div class="b" style="left:198.00px;top:24.60px;width:1px;height:17px;background:#a0a0a0"></div>
<div class="b" style="left:200.00px;top:39.60px;width:17px;height:1px;background:#a0a0a0"></div>
<div class="b" style="left:217.00px;top:24.60px;width:1px;height:17px;background:#a0a0a0"></div>
<div class="b" style="left:219.00px;top:39.60px;width:17px;height:1px;background:#a0a0a0"></div>
<div class="b" style="left:236.00px;top:24.60px;width:1px;height:17px;background:#a0a0a0"></div>
<div class="b" style="left:238.00px;top:39.60px;width:17px;height:1px;background:#a0a0a0"></div>
<div class="b" style="left:238.00px;top:26.60px;width:17px;height:14px;background:#FFFF00"></div>
<div class="t" style="left:237.81px;top:26.76px;font-size:12.3px;color:#000;font-weight:bold;letter-spacing:-0.6px">&lt;A</div>
<div class="b" style="left:255.00px;top:24.60px;width:1px;height:17px;background:#a0a0a0"></div>
<div class="b" style="left:257.00px;top:39.60px;width:17px;height:1px;background:#a0a0a0"></div>
<div class="b" style="left:274.00px;top:24.60px;width:1px;height:17px;background:#a0a0a0"></div>
<div class="b" style="left:275.00px;top:39.60px;width:18px;height:1px;background:#a0a0a0"></div>
<div class="b" style="left:293.00px;top:24.60px;width:1px;height:17px;background:#a0a0a0"></div>
<div class="b" style="left:294.00px;top:39.60px;width:18px;height:1px;background:#a0a0a0"></div>
<div class="b" style="left:311.00px;top:24.60px;width:1px;height:17px;background:#a0a0a0"></div>
<div class="b" style="left:313.00px;top:39.60px;width:17px;height:1px;background:#a0a0a0"></div>
<div class="b" style="left:330.00px;top:24.60px;width:1px;height:17px;background:#a0a0a0"></div>
<div class="b" style="left:332.00px;top:39.60px;width:17px;height:1px;background:#a0a0a0"></div>
<div class="b" style="left:349.00px;top:24.60px;width:1px;height:17px;background:#a0a0a0"></div>
<div class="b" style="left:351.00px;top:39.60px;width:17px;height:1px;background:#a0a0a0"></div>
<div class="b" style="left:368.00px;top:24.60px;width:1px;height:17px;background:#a0a0a0"></div>
<div class="b" style="left:370.00px;top:39.60px;width:17px;height:1px;background:#a0a0a0"></div>
<div class="b" style="left:387.00px;top:24.60px;width:1px;height:17px;background:#a0a0a0"></div>
<div class="b" style="left:389.00px;top:39.60px;width:17px;height:1px;background:#a0a0a0"></div>
<div class="b" style="left:406.00px;top:24.60px;width:1px;height:17px;background:#a0a0a0"></div>
<div class="b" style="left:408.00px;top:39.60px;width:17px;height:1px;background:#a0a0a0"></div>
<div class="b" style="left:425.00px;top:24.60px;width:1px;height:17px;background:#a0a0a0"></div>
<div class="b" style="left:427.00px;top:39.60px;width:17px;height:1px;background:#a0a0a0"></div>
<div class="b" style="left:444.00px;top:24.60px;width:1px;height:17px;background:#a0a0a0"></div>
<div class="b" style="left:446.00px;top:39.60px;width:17px;height:1px;background:#a0a0a0"></div>
<div class="b" style="left:463.00px;top:24.60px;width:1px;height:17px;background:#a0a0a0"></div>
<div class="b" style="left:464.00px;top:39.60px;width:18px;height:1px;background:#a0a0a0"></div>
<div class="b" style="left:482.00px;top:24.60px;width:1px;height:17px;background:#a0a0a0"></div>
<div class="b" style="left:483.00px;top:39.60px;width:18px;height:1px;background:#a0a0a0"></div>
<div class="b" style="left:500.00px;top:24.60px;width:1px;height:17px;background:#a0a0a0"></div>
<div class="b" style="left:502.00px;top:39.60px;width:17px;height:1px;background:#a0a0a0"></div>
<div class="b" style="left:519.00px;top:24.60px;width:1px;height:17px;background:#a0a0a0"></div>
<div class="b" style="left:521.00px;top:39.60px;width:17px;height:1px;background:#a0a0a0"></div>
<div class="b" style="left:538.00px;top:24.60px;width:1px;height:17px;background:#a0a0a0"></div>
<div class="b" style="left:540.00px;top:39.60px;width:17px;height:1px;background:#a0a0a0"></div>
<div class="b" style="left:557.00px;top:24.60px;width:1px;height:17px;background:#a0a0a0"></div>
<div class="b" style="left:559.00px;top:39.60px;width:17px;height:1px;background:#a0a0a0"></div>
<div class="b" style="left:576.00px;top:24.60px;width:1px;height:17px;background:#a0a0a0"></div>
<div class="b" style="left:578.00px;top:39.60px;width:17px;height:1px;background:#a0a0a0"></div>
<div class="b" style="left:595.00px;top:24.60px;width:1px;height:17px;background:#a0a0a0"></div>
<div class="b" style="left:597.00px;top:39.60px;width:17px;height:1px;background:#a0a0a0"></div>
<div class="b" style="left:614.00px;top:24.60px;width:1px;height:17px;background:#a0a0a0"></div>
<div class="b" style="left:616.00px;top:39.60px;width:17px;height:1px;background:#a0a0a0"></div>
<div class="b" style="left:633.00px;top:24.60px;width:1px;height:17px;background:#a0a0a0"></div>
<div class="b" style="left:635.00px;top:39.60px;width:17px;height:1px;background:#a0a0a0"></div>
<div class="b" style="left:635.00px;top:26.60px;width:17px;height:14px;background:#00FFFF"></div>
<div class="t" style="left:634.78px;top:26.76px;font-size:12.3px;color:#000;font-weight:bold;letter-spacing:-0.6px">&lt;A</div>
<div class="b" style="left:652.00px;top:24.60px;width:1px;height:17px;background:#a0a0a0"></div>
<div class="b" style="left:653.00px;top:39.60px;width:18px;height:1px;background:#a0a0a0"></div>
<div class="b" style="left:671.00px;top:24.60px;width:1px;height:17px;background:#a0a0a0"></div>
<div class="b" style="left:672.00px;top:39.60px;width:18px;height:1px;background:#a0a0a0"></div>
<div class="b" style="left:689.00px;top:24.60px;width:1px;height:17px;background:#a0a0a0"></div>
<div class="b" style="left:691.00px;top:39.60px;width:17px;height:1px;background:#a0a0a0"></div>
<div class="b" style="left:708.00px;top:24.60px;width:1px;height:17px;background:#a0a0a0"></div>
<div class="b" style="left:710.00px;top:39.60px;width:17px;height:1px;background:#a0a0a0"></div>
<div class="b" style="left:727.00px;top:24.60px;width:1px;height:17px;background:#a0a0a0"></div>
<div class="b" style="left:729.00px;top:39.60px;width:17px;height:1px;background:#a0a0a0"></div>
<div class="b" style="left:748.00px;top:26.60px;width:1px;height:14px;background:#a0a0a0"></div>
<div class="b" style="left:2.00px;top:46.60px;width:51px;height:1px;background:#a0a0a0"></div>
<div class="b" style="left:2.00px;top:46.60px;width:1px;height:18px;background:#a0a0a0"></div>
<div class="b" style="left:51.00px;top:48.60px;width:1px;height:15px;background:#a0a0a0"></div>
<div class="b" style="left:3.00px;top:62.60px;width:49px;height:1px;background:#a0a0a0"></div>
<div class="t" style="left:5.50px;top:50.42px;font-size:11px;color:#000;font-weight:normal;">103</div>
<div class="b" style="left:55.00px;top:46.60px;width:104px;height:1px;background:#a0a0a0"></div>
<div class="b" style="left:55.00px;top:46.60px;width:1px;height:18px;background:#a0a0a0"></div>
<div class="b" style="left:157.00px;top:48.60px;width:1px;height:15px;background:#a0a0a0"></div>
<div class="b" style="left:57.00px;top:62.60px;width:101px;height:1px;background:#a0a0a0"></div>
<div class="t" style="left:58.299999999999955px;top:50.32px;width:97px;overflow:hidden;font-size:10.8px;color:#000">ΔΩΜ.ΔΙΚΛ. (Γ)</div>
<div class="b" style="left:160.00px;top:46.60px;width:589px;height:1px;background:#a0a0a0"></div>
<div class="b" style="left:160.00px;top:46.60px;width:1px;height:18px;background:#a0a0a0"></div>
<div class="b" style="left:162.00px;top:62.60px;width:17px;height:1px;background:#a0a0a0"></div>
<div class="b" style="left:179.00px;top:46.60px;width:1px;height:18px;background:#a0a0a0"></div>
<div class="b" style="left:181.00px;top:62.60px;width:17px;height:1px;background:#a0a0a0"></div>
<div class="b" style="left:198.00px;top:46.60px;width:1px;height:18px;background:#a0a0a0"></div>
<div class="b" style="left:200.00px;top:62.60px;width:17px;height:1px;background:#a0a0a0"></div>
<div class="b" style="left:217.00px;top:46.60px;width:1px;height:18px;background:#a0a0a0"></div>
<div class="b" style="left:219.00px;top:62.60px;width:17px;height:1px;background:#a0a0a0"></div>
<div class="b" style="left:236.00px;top:46.60px;width:1px;height:18px;background:#a0a0a0"></div>
<div class="b" style="left:238.00px;top:62.60px;width:17px;height:1px;background:#a0a0a0"></div>
<div class="b" style="left:238.00px;top:48.60px;width:17px;height:14px;background:#FFFF00"></div>
<div class="t" style="left:237.81px;top:49.42px;font-size:12.3px;color:#000;font-weight:bold;letter-spacing:-0.6px">&lt;A</div>
<div class="b" style="left:255.00px;top:46.60px;width:1px;height:18px;background:#a0a0a0"></div>
<div class="b" style="left:257.00px;top:62.60px;width:17px;height:1px;background:#a0a0a0"></div>
<div class="b" style="left:274.00px;top:46.60px;width:1px;height:18px;background:#a0a0a0"></div>
<div class="b" style="left:275.00px;top:62.60px;width:18px;height:1px;background:#a0a0a0"></div>
<div class="b" style="left:293.00px;top:46.60px;width:1px;height:18px;background:#a0a0a0"></div>
<div class="b" style="left:294.00px;top:62.60px;width:18px;height:1px;background:#a0a0a0"></div>
<div class="b" style="left:311.00px;top:46.60px;width:1px;height:18px;background:#a0a0a0"></div>
<div class="b" style="left:313.00px;top:62.60px;width:17px;height:1px;background:#a0a0a0"></div>
<div class="b" style="left:330.00px;top:46.60px;width:1px;height:18px;background:#a0a0a0"></div>
<div class="b" style="left:332.00px;top:62.60px;width:17px;height:1px;background:#a0a0a0"></div>
<div class="b" style="left:349.00px;top:46.60px;width:1px;height:18px;background:#a0a0a0"></div>
<div class="b" style="left:351.00px;top:62.60px;width:17px;height:1px;background:#a0a0a0"></div>
<div class="b" style="left:368.00px;top:46.60px;width:1px;height:18px;background:#a0a0a0"></div>
<div class="b" style="left:370.00px;top:62.60px;width:17px;height:1px;background:#a0a0a0"></div>
<div class="b" style="left:387.00px;top:46.60px;width:1px;height:18px;background:#a0a0a0"></div>
<div class="b" style="left:389.00px;top:62.60px;width:17px;height:1px;background:#a0a0a0"></div>
<div class="b" style="left:406.00px;top:46.60px;width:1px;height:18px;background:#a0a0a0"></div>
<div class="b" style="left:408.00px;top:62.60px;width:17px;height:1px;background:#a0a0a0"></div>
<div class="b" style="left:425.00px;top:46.60px;width:1px;height:18px;background:#a0a0a0"></div>
<div class="b" style="left:427.00px;top:62.60px;width:17px;height:1px;background:#a0a0a0"></div>
<div class="b" style="left:444.00px;top:46.60px;width:1px;height:18px;background:#a0a0a0"></div>
<div class="b" style="left:446.00px;top:62.60px;width:17px;height:1px;background:#a0a0a0"></div>
<div class="b" style="left:463.00px;top:46.60px;width:1px;height:18px;background:#a0a0a0"></div>
<div class="b" style="left:464.00px;top:62.60px;width:18px;height:1px;background:#a0a0a0"></div>
<div class="b" style="left:482.00px;top:46.60px;width:1px;height:18px;background:#a0a0a0"></div>
<div class="b" style="left:483.00px;top:62.60px;width:18px;height:1px;background:#a0a0a0"></div>
<div class="b" style="left:500.00px;top:46.60px;width:1px;height:18px;background:#a0a0a0"></div>
<div class="b" style="left:502.00px;top:62.60px;width:17px;height:1px;background:#a0a0a0"></div>
<div class="b" style="left:519.00px;top:46.60px;width:1px;height:18px;background:#a0a0a0"></div>
<div class="b" style="left:521.00px;top:62.60px;width:17px;height:1px;background:#a0a0a0"></div>
<div class="b" style="left:538.00px;top:46.60px;width:1px;height:18px;background:#a0a0a0"></div>
<div class="b" style="left:540.00px;top:62.60px;width:17px;height:1px;background:#a0a0a0"></div>
<div class="b" style="left:557.00px;top:46.60px;width:1px;height:18px;background:#a0a0a0"></div>
<div class="b" style="left:559.00px;top:62.60px;width:17px;height:1px;background:#a0a0a0"></div>
<div class="b" style="left:576.00px;top:46.60px;width:1px;height:18px;background:#a0a0a0"></div>
<div class="b" style="left:578.00px;top:62.60px;width:17px;height:1px;background:#a0a0a0"></div>
<div class="b" style="left:595.00px;top:46.60px;width:1px;height:18px;background:#a0a0a0"></div>
<div class="b" style="left:597.00px;top:62.60px;width:17px;height:1px;background:#a0a0a0"></div>
<div class="b" style="left:614.00px;top:46.60px;width:1px;height:18px;background:#a0a0a0"></div>
<div class="b" style="left:616.00px;top:62.60px;width:17px;height:1px;background:#a0a0a0"></div>
<div class="b" style="left:633.00px;top:46.60px;width:1px;height:18px;background:#a0a0a0"></div>
<div class="b" style="left:635.00px;top:62.60px;width:17px;height:1px;background:#a0a0a0"></div>
<div class="b" style="left:635.00px;top:48.60px;width:17px;height:14px;background:#00FFFF"></div>
<div class="t" style="left:634.78px;top:49.42px;font-size:12.3px;color:#000;font-weight:bold;letter-spacing:-0.6px">&lt;A</div>
<div class="b" style="left:652.00px;top:46.60px;width:1px;height:18px;background:#a0a0a0"></div>
<div class="b" style="left:653.00px;top:62.60px;width:18px;height:1px;background:#a0a0a0"></div>
<div class="b" style="left:671.00px;top:46.60px;width:1px;height:18px;background:#a0a0a0"></div>
<div class="b" style="left:672.00px;top:62.60px;width:18px;height:1px;background:#a0a0a0"></div>
<div class="b" style="left:689.00px;top:46.60px;width:1px;height:18px;background:#a0a0a0"></div>
<div class="b" style="left:691.00px;top:62.60px;width:17px;height:1px;background:#a0a0a0"></div>
<div class="b" style="left:708.00px;top:46.60px;width:1px;height:18px;background:#a0a0a0"></div>
<div class="b" style="left:710.00px;top:62.60px;width:17px;height:1px;background:#a0a0a0"></div>
<div class="b" style="left:727.00px;top:46.60px;width:1px;height:18px;background:#a0a0a0"></div>
<div class="b" style="left:729.00px;top:62.60px;width:17px;height:1px;background:#a0a0a0"></div>
<div class="b" style="left:748.00px;top:48.60px;width:1px;height:15px;background:#a0a0a0"></div>
<div class="b" style="left:2.00px;top:69.60px;width:51px;height:1px;background:#a0a0a0"></div>
<div class="b" style="left:2.00px;top:69.60px;width:1px;height:18px;background:#a0a0a0"></div>
<div class="b" style="left:51.00px;top:71.60px;width:1px;height:15px;background:#a0a0a0"></div>
<div class="b" style="left:3.00px;top:85.60px;width:49px;height:1px;background:#a0a0a0"></div>
<div class="t" style="left:5.50px;top:73.09px;font-size:11px;color:#000;font-weight:normal;">104</div>
<div class="b" style="left:55.00px;top:69.60px;width:104px;height:1px;background:#a0a0a0"></div>
<div class="b" style="left:55.00px;top:69.60px;width:1px;height:18px;background:#a0a0a0"></div>
<div class="b" style="left:157.00px;top:71.60px;width:1px;height:15px;background:#a0a0a0"></div>
<div class="b" style="left:57.00px;top:85.60px;width:101px;height:1px;background:#a0a0a0"></div>
<div class="t" style="left:58.299999999999955px;top:72.99px;width:97px;overflow:hidden;font-size:10.8px;color:#000">ΔΩΜ. ΣΟΥΙΤΑ ΜΙΚΡΗ</div>
<div class="b" style="left:160.00px;top:69.60px;width:589px;height:1px;background:#a0a0a0"></div>
<div class="b" style="left:160.00px;top:69.60px;width:1px;height:18px;background:#a0a0a0"></div>
<div class="b" style="left:162.00px;top:85.60px;width:17px;height:1px;background:#a0a0a0"></div>
<div class="b" style="left:179.00px;top:69.60px;width:1px;height:18px;background:#a0a0a0"></div>
<div class="b" style="left:181.00px;top:85.60px;width:17px;height:1px;background:#a0a0a0"></div>
<div class="b" style="left:198.00px;top:69.60px;width:1px;height:18px;background:#a0a0a0"></div>
<div class="b" style="left:200.00px;top:85.60px;width:17px;height:1px;background:#a0a0a0"></div>
<div class="b" style="left:217.00px;top:69.60px;width:1px;height:18px;background:#a0a0a0"></div>
<div class="b" style="left:219.00px;top:85.60px;width:17px;height:1px;background:#a0a0a0"></div>
<div class="b" style="left:236.00px;top:69.60px;width:1px;height:18px;background:#a0a0a0"></div>
<div class="b" style="left:238.00px;top:85.60px;width:17px;height:1px;background:#a0a0a0"></div>
<div class="b" style="left:238.00px;top:71.60px;width:17px;height:14px;background:#00FF00"></div>
<div class="t" style="left:237.81px;top:72.09px;font-size:12.3px;color:#000;font-weight:bold;letter-spacing:-0.6px">&lt;A</div>
<div class="b" style="left:255.00px;top:69.60px;width:1px;height:18px;background:#a0a0a0"></div>
<div class="b" style="left:257.00px;top:85.60px;width:17px;height:1px;background:#a0a0a0"></div>
<div class="b" style="left:274.00px;top:69.60px;width:1px;height:18px;background:#a0a0a0"></div>
<div class="b" style="left:275.00px;top:85.60px;width:18px;height:1px;background:#a0a0a0"></div>
<div class="b" style="left:293.00px;top:69.60px;width:1px;height:18px;background:#a0a0a0"></div>
<div class="b" style="left:294.00px;top:85.60px;width:18px;height:1px;background:#a0a0a0"></div>
<div class="b" style="left:311.00px;top:69.60px;width:1px;height:18px;background:#a0a0a0"></div>
<div class="b" style="left:313.00px;top:85.60px;width:17px;height:1px;background:#a0a0a0"></div>
<div class="b" style="left:330.00px;top:69.60px;width:1px;height:18px;background:#a0a0a0"></div>
<div class="b" style="left:332.00px;top:85.60px;width:17px;height:1px;background:#a0a0a0"></div>
<div class="b" style="left:349.00px;top:69.60px;width:1px;height:18px;background:#a0a0a0"></div>
<div class="b" style="left:351.00px;top:85.60px;width:17px;height:1px;background:#a0a0a0"></div>
<div class="b" style="left:368.00px;top:69.60px;width:1px;height:18px;background:#a0a0a0"></div>
<div class="b" style="left:370.00px;top:85.60px;width:17px;height:1px;background:#a0a0a0"></div>
<div class="b" style="left:387.00px;top:69.60px;width:1px;height:18px;background:#a0a0a0"></div>
<div class="b" style="left:389.00px;top:85.60px;width:17px;height:1px;background:#a0a0a0"></div>
<div class="b" style="left:406.00px;top:69.60px;width:1px;height:18px;background:#a0a0a0"></div>
<div class="b" style="left:408.00px;top:85.60px;width:17px;height:1px;background:#a0a0a0"></div>
<div class="b" style="left:425.00px;top:69.60px;width:1px;height:18px;background:#a0a0a0"></div>
<div class="b" style="left:427.00px;top:85.60px;width:17px;height:1px;background:#a0a0a0"></div>
<div class="b" style="left:444.00px;top:69.60px;width:1px;height:18px;background:#a0a0a0"></div>
<div class="b" style="left:446.00px;top:85.60px;width:17px;height:1px;background:#a0a0a0"></div>
<div class="b" style="left:463.00px;top:69.60px;width:1px;height:18px;background:#a0a0a0"></div>
<div class="b" style="left:464.00px;top:85.60px;width:18px;height:1px;background:#a0a0a0"></div>
<div class="b" style="left:482.00px;top:69.60px;width:1px;height:18px;background:#a0a0a0"></div>
<div class="b" style="left:483.00px;top:85.60px;width:18px;height:1px;background:#a0a0a0"></div>
<div class="b" style="left:500.00px;top:69.60px;width:1px;height:18px;background:#a0a0a0"></div>
<div class="b" style="left:502.00px;top:85.60px;width:17px;height:1px;background:#a0a0a0"></div>
<div class="b" style="left:519.00px;top:69.60px;width:1px;height:18px;background:#a0a0a0"></div>
<div class="b" style="left:521.00px;top:85.60px;width:17px;height:1px;background:#a0a0a0"></div>
<div class="b" style="left:538.00px;top:69.60px;width:1px;height:18px;background:#a0a0a0"></div>
<div class="b" style="left:540.00px;top:85.60px;width:17px;height:1px;background:#a0a0a0"></div>
<div class="b" style="left:557.00px;top:69.60px;width:1px;height:18px;background:#a0a0a0"></div>
<div class="b" style="left:559.00px;top:85.60px;width:17px;height:1px;background:#a0a0a0"></div>
<div class="b" style="left:576.00px;top:69.60px;width:1px;height:18px;background:#a0a0a0"></div>
<div class="b" style="left:578.00px;top:85.60px;width:17px;height:1px;background:#a0a0a0"></div>
<div class="b" style="left:595.00px;top:69.60px;width:1px;height:18px;background:#a0a0a0"></div>
<div class="b" style="left:597.00px;top:85.60px;width:17px;height:1px;background:#a0a0a0"></div>
<div class="b" style="left:614.00px;top:69.60px;width:1px;height:18px;background:#a0a0a0"></div>
<div class="b" style="left:616.00px;top:85.60px;width:17px;height:1px;background:#a0a0a0"></div>
<div class="b" style="left:633.00px;top:69.60px;width:1px;height:18px;background:#a0a0a0"></div>
<div class="b" style="left:635.00px;top:85.60px;width:17px;height:1px;background:#a0a0a0"></div>
<div class="b" style="left:652.00px;top:69.60px;width:1px;height:18px;background:#a0a0a0"></div>
<div class="b" style="left:653.00px;top:85.60px;width:18px;height:1px;background:#a0a0a0"></div>
<div class="b" style="left:671.00px;top:69.60px;width:1px;height:18px;background:#a0a0a0"></div>
<div class="b" style="left:672.00px;top:85.60px;width:18px;height:1px;background:#a0a0a0"></div>
<div class="b" style="left:689.00px;top:69.60px;width:1px;height:18px;background:#a0a0a0"></div>
<div class="b" style="left:691.00px;top:85.60px;width:17px;height:1px;background:#a0a0a0"></div>
<div class="b" style="left:708.00px;top:69.60px;width:1px;height:18px;background:#a0a0a0"></div>
<div class="b" style="left:710.00px;top:85.60px;width:17px;height:1px;background:#a0a0a0"></div>
<div class="b" style="left:727.00px;top:69.60px;width:1px;height:18px;background:#a0a0a0"></div>
<div class="b" style="left:729.00px;top:85.60px;width:17px;height:1px;background:#a0a0a0"></div>
<div class="b" style="left:748.00px;top:71.60px;width:1px;height:15px;background:#a0a0a0"></div>
<div class="b" style="left:2.00px;top:92.60px;width:51px;height:1px;background:#a0a0a0"></div>
<div class="b" style="left:2.00px;top:92.60px;width:1px;height:17px;background:#a0a0a0"></div>
<div class="b" style="left:51.00px;top:94.60px;width:1px;height:14px;background:#a0a0a0"></div>
<div class="b" style="left:3.00px;top:107.60px;width:49px;height:1px;background:#a0a0a0"></div>
<div class="t" style="left:5.50px;top:95.76px;font-size:11px;color:#000;font-weight:normal;">105</div>
<div class="b" style="left:55.00px;top:92.60px;width:104px;height:1px;background:#a0a0a0"></div>
<div class="b" style="left:55.00px;top:92.60px;width:1px;height:17px;background:#a0a0a0"></div>
<div class="b" style="left:157.00px;top:94.60px;width:1px;height:14px;background:#a0a0a0"></div>
<div class="b" style="left:57.00px;top:107.60px;width:101px;height:1px;background:#a0a0a0"></div>
<div class="t" style="left:58.299999999999955px;top:95.66px;width:97px;overflow:hidden;font-size:10.8px;color:#000">ΔΩΜ.ΣΟΥΙΤΑ ΜΙΚΡΗ</div>
<div class="b" style="left:160.00px;top:92.60px;width:589px;height:1px;background:#a0a0a0"></div>
<div class="b" style="left:160.00px;top:92.60px;width:1px;height:17px;background:#a0a0a0"></div>
<div class="b" style="left:162.00px;top:107.60px;width:17px;height:1px;background:#a0a0a0"></div>
<div class="b" style="left:162.00px;top:94.60px;width:17px;height:14px;background:#FFFF00"></div>
<div class="t" style="left:166.20px;top:95.01px;font-size:12px;color:#000;font-weight:normal;">T</div>
<div class="b" style="left:179.00px;top:92.60px;width:1px;height:17px;background:#a0a0a0"></div>
<div class="b" style="left:181.00px;top:107.60px;width:17px;height:1px;background:#a0a0a0"></div>
<div class="b" style="left:181.00px;top:94.60px;width:17px;height:14px;background:#FFFF00"></div>
<div class="t" style="left:185.10px;top:95.01px;font-size:12px;color:#000;font-weight:normal;">E</div>
<div class="b" style="left:198.00px;top:92.60px;width:1px;height:17px;background:#a0a0a0"></div>
<div class="b" style="left:200.00px;top:107.60px;width:17px;height:1px;background:#a0a0a0"></div>
<div class="b" style="left:200.00px;top:94.60px;width:17px;height:14px;background:#FFFF00"></div>
<div class="t" style="left:204.01px;top:95.01px;font-size:12px;color:#000;font-weight:normal;">S</div>
<div class="b" style="left:217.00px;top:92.60px;width:1px;height:17px;background:#a0a0a0"></div>
<div class="b" style="left:219.00px;top:107.60px;width:17px;height:1px;background:#a0a0a0"></div>
<div class="b" style="left:219.00px;top:94.60px;width:17px;height:14px;background:#FFFF00"></div>
<div class="t" style="left:222.91px;top:95.01px;font-size:12px;color:#000;font-weight:normal;">T</div>
<div class="b" style="left:236.00px;top:92.60px;width:1px;height:17px;background:#a0a0a0"></div>
<div class="b" style="left:238.00px;top:107.60px;width:17px;height:1px;background:#a0a0a0"></div>
<div class="b" style="left:238.00px;top:94.60px;width:17px;height:14px;background:#FFFF00"></div>
<div class="b" style="left:255.00px;top:92.60px;width:1px;height:17px;background:#a0a0a0"></div>
<div class="b" style="left:257.00px;top:107.60px;width:17px;height:1px;background:#a0a0a0"></div>
<div class="b" style="left:257.00px;top:94.60px;width:17px;height:14px;background:#FFFF00"></div>
<div class="b" style="left:274.00px;top:92.60px;width:1px;height:17px;background:#a0a0a0"></div>
<div class="b" style="left:275.00px;top:107.60px;width:18px;height:1px;background:#a0a0a0"></div>
<div class="b" style="left:276.00px;top:94.60px;width:17px;height:14px;background:#FFFF00"></div>
<div class="b" style="left:293.00px;top:92.60px;width:1px;height:17px;background:#a0a0a0"></div>
<div class="b" style="left:294.00px;top:107.60px;width:18px;height:1px;background:#a0a0a0"></div>
<div class="b" style="left:294.00px;top:94.60px;width:17px;height:14px;background:#FFFF00"></div>
<div class="b" style="left:311.00px;top:92.60px;width:1px;height:17px;background:#a0a0a0"></div>
<div class="b" style="left:313.00px;top:107.60px;width:17px;height:1px;background:#a0a0a0"></div>
<div class="b" style="left:313.00px;top:94.60px;width:17px;height:14px;background:#FFFF00"></div>
<div class="b" style="left:330.00px;top:92.60px;width:1px;height:17px;background:#a0a0a0"></div>
<div class="b" style="left:332.00px;top:107.60px;width:17px;height:1px;background:#a0a0a0"></div>
<div class="b" style="left:332.00px;top:94.60px;width:17px;height:14px;background:#FFFF00"></div>
<div class="b" style="left:349.00px;top:92.60px;width:1px;height:17px;background:#a0a0a0"></div>
<div class="b" style="left:351.00px;top:107.60px;width:17px;height:1px;background:#a0a0a0"></div>
<div class="b" style="left:351.00px;top:94.60px;width:17px;height:14px;background:#FFFF00"></div>
<div class="b" style="left:368.00px;top:92.60px;width:1px;height:17px;background:#a0a0a0"></div>
<div class="b" style="left:370.00px;top:107.60px;width:17px;height:1px;background:#a0a0a0"></div>
<div class="b" style="left:370.00px;top:94.60px;width:17px;height:14px;background:#FFFF00"></div>
<div class="b" style="left:387.00px;top:92.60px;width:1px;height:17px;background:#a0a0a0"></div>
<div class="b" style="left:389.00px;top:107.60px;width:17px;height:1px;background:#a0a0a0"></div>
<div class="b" style="left:389.00px;top:94.60px;width:17px;height:14px;background:#FFFF00"></div>
<div class="b" style="left:406.00px;top:92.60px;width:1px;height:17px;background:#a0a0a0"></div>
<div class="b" style="left:408.00px;top:107.60px;width:17px;height:1px;background:#a0a0a0"></div>
<div class="b" style="left:408.00px;top:94.60px;width:17px;height:14px;background:#FFFF00"></div>
<div class="b" style="left:425.00px;top:92.60px;width:1px;height:17px;background:#a0a0a0"></div>
<div class="b" style="left:427.00px;top:107.60px;width:17px;height:1px;background:#a0a0a0"></div>
<div class="b" style="left:427.00px;top:94.60px;width:17px;height:14px;background:#FFFF00"></div>
<div class="t" style="left:429.34px;top:99.25px;font-size:9px;color:#400;font-weight:bold;">--</div>
<div class="b" style="left:444.00px;top:92.60px;width:1px;height:17px;background:#a0a0a0"></div>
<div class="b" style="left:446.00px;top:107.60px;width:17px;height:1px;background:#a0a0a0"></div>
<div class="b" style="left:446.00px;top:94.60px;width:17px;height:14px;background:#FFFF00"></div>
<div class="t" style="left:448.24px;top:99.25px;font-size:9px;color:#400;font-weight:bold;">--</div>
<div class="b" style="left:463.00px;top:92.60px;width:1px;height:17px;background:#a0a0a0"></div>
<div class="b" style="left:464.00px;top:107.60px;width:18px;height:1px;background:#a0a0a0"></div>
<div class="b" style="left:465.00px;top:94.60px;width:17px;height:14px;background:#FFFF00"></div>
<div class="t" style="left:467.15px;top:99.25px;font-size:9px;color:#400;font-weight:bold;">--</div>
<div class="b" style="left:482.00px;top:92.60px;width:1px;height:17px;background:#a0a0a0"></div>
<div class="b" style="left:483.00px;top:107.60px;width:18px;height:1px;background:#a0a0a0"></div>
<div class="b" style="left:483.00px;top:94.60px;width:17px;height:14px;background:#FFFF00"></div>
<div class="t" style="left:486.05px;top:99.25px;font-size:9px;color:#400;font-weight:bold;">--</div>
<div class="b" style="left:500.00px;top:92.60px;width:1px;height:17px;background:#a0a0a0"></div>
<div class="b" style="left:502.00px;top:107.60px;width:17px;height:1px;background:#a0a0a0"></div>
<div class="b" style="left:519.00px;top:92.60px;width:1px;height:17px;background:#a0a0a0"></div>
<div class="b" style="left:521.00px;top:107.60px;width:17px;height:1px;background:#a0a0a0"></div>
<div class="b" style="left:538.00px;top:92.60px;width:1px;height:17px;background:#a0a0a0"></div>
<div class="b" style="left:540.00px;top:107.60px;width:17px;height:1px;background:#a0a0a0"></div>
<div class="b" style="left:557.00px;top:92.60px;width:1px;height:17px;background:#a0a0a0"></div>
<div class="b" style="left:559.00px;top:107.60px;width:17px;height:1px;background:#a0a0a0"></div>
<div class="b" style="left:576.00px;top:92.60px;width:1px;height:17px;background:#a0a0a0"></div>
<div class="b" style="left:578.00px;top:107.60px;width:17px;height:1px;background:#a0a0a0"></div>
<div class="b" style="left:595.00px;top:92.60px;width:1px;height:17px;background:#a0a0a0"></div>
<div class="b" style="left:597.00px;top:107.60px;width:17px;height:1px;background:#a0a0a0"></div>
<div class="b" style="left:614.00px;top:92.60px;width:1px;height:17px;background:#a0a0a0"></div>
<div class="b" style="left:616.00px;top:107.60px;width:17px;height:1px;background:#a0a0a0"></div>
<div class="b" style="left:633.00px;top:92.60px;width:1px;height:17px;background:#a0a0a0"></div>
<div class="b" style="left:635.00px;top:107.60px;width:17px;height:1px;background:#a0a0a0"></div>
<div class="b" style="left:652.00px;top:92.60px;width:1px;height:17px;background:#a0a0a0"></div>
<div class="b" style="left:653.00px;top:107.60px;width:18px;height:1px;background:#a0a0a0"></div>
<div class="b" style="left:671.00px;top:92.60px;width:1px;height:17px;background:#a0a0a0"></div>
<div class="b" style="left:672.00px;top:107.60px;width:18px;height:1px;background:#a0a0a0"></div>
<div class="b" style="left:689.00px;top:92.60px;width:1px;height:17px;background:#a0a0a0"></div>
<div class="b" style="left:691.00px;top:107.60px;width:17px;height:1px;background:#a0a0a0"></div>
<div class="b" style="left:708.00px;top:92.60px;width:1px;height:17px;background:#a0a0a0"></div>
<div class="b" style="left:710.00px;top:107.60px;width:17px;height:1px;background:#a0a0a0"></div>
<div class="b" style="left:727.00px;top:92.60px;width:1px;height:17px;background:#a0a0a0"></div>
<div class="b" style="left:729.00px;top:107.60px;width:17px;height:1px;background:#a0a0a0"></div>
<div class="b" style="left:748.00px;top:94.60px;width:1px;height:14px;background:#a0a0a0"></div>
<div class="b" style="left:2.00px;top:114.60px;width:51px;height:1px;background:#a0a0a0"></div>
<div class="b" style="left:2.00px;top:114.60px;width:1px;height:18px;background:#a0a0a0"></div>
<div class="b" style="left:51.00px;top:116.60px;width:1px;height:15px;background:#a0a0a0"></div>
<div class="b" style="left:3.00px;top:130.60px;width:49px;height:1px;background:#a0a0a0"></div>
<div class="t" style="left:5.50px;top:118.42px;font-size:11px;color:#000;font-weight:normal;">106</div>
<div class="b" style="left:55.00px;top:114.60px;width:104px;height:1px;background:#a0a0a0"></div>
<div class="b" style="left:55.00px;top:114.60px;width:1px;height:18px;background:#a0a0a0"></div>
<div class="b" style="left:157.00px;top:116.60px;width:1px;height:15px;background:#a0a0a0"></div>
<div class="b" style="left:57.00px;top:130.60px;width:101px;height:1px;background:#a0a0a0"></div>
<div class="t" style="left:58.299999999999955px;top:118.32px;width:97px;overflow:hidden;font-size:10.8px;color:#000">ΔΩΜ.ΔΙΚΛ.ΦΑΡΔΥ (ΔΙΠΛΟ)</div>
<div class="b" style="left:160.00px;top:114.60px;width:589px;height:1px;background:#a0a0a0"></div>
<div class="b" style="left:160.00px;top:114.60px;width:1px;height:18px;background:#a0a0a0"></div>
<div class="b" style="left:162.00px;top:130.60px;width:17px;height:1px;background:#a0a0a0"></div>
<div class="b" style="left:179.00px;top:114.60px;width:1px;height:18px;background:#a0a0a0"></div>
<div class="b" style="left:181.00px;top:130.60px;width:17px;height:1px;background:#a0a0a0"></div>
<div class="b" style="left:198.00px;top:114.60px;width:1px;height:18px;background:#a0a0a0"></div>
<div class="b" style="left:200.00px;top:130.60px;width:17px;height:1px;background:#a0a0a0"></div>
<div class="b" style="left:217.00px;top:114.60px;width:1px;height:18px;background:#a0a0a0"></div>
<div class="b" style="left:219.00px;top:130.60px;width:17px;height:1px;background:#a0a0a0"></div>
<div class="b" style="left:236.00px;top:114.60px;width:1px;height:18px;background:#a0a0a0"></div>
<div class="b" style="left:238.00px;top:130.60px;width:17px;height:1px;background:#a0a0a0"></div>
<div class="b" style="left:238.00px;top:116.60px;width:17px;height:14px;background:#FFFF00"></div>
<div class="t" style="left:237.81px;top:117.42px;font-size:12.3px;color:#000;font-weight:bold;letter-spacing:-0.6px">&lt;A</div>
<div class="b" style="left:255.00px;top:114.60px;width:1px;height:18px;background:#a0a0a0"></div>
<div class="b" style="left:257.00px;top:130.60px;width:17px;height:1px;background:#a0a0a0"></div>
<div class="b" style="left:274.00px;top:114.60px;width:1px;height:18px;background:#a0a0a0"></div>
<div class="b" style="left:275.00px;top:130.60px;width:18px;height:1px;background:#a0a0a0"></div>
<div class="b" style="left:293.00px;top:114.60px;width:1px;height:18px;background:#a0a0a0"></div>
<div class="b" style="left:294.00px;top:130.60px;width:18px;height:1px;background:#a0a0a0"></div>
<div class="b" style="left:311.00px;top:114.60px;width:1px;height:18px;background:#a0a0a0"></div>
<div class="b" style="left:313.00px;top:130.60px;width:17px;height:1px;background:#a0a0a0"></div>
<div class="b" style="left:330.00px;top:114.60px;width:1px;height:18px;background:#a0a0a0"></div>
<div class="b" style="left:332.00px;top:130.60px;width:17px;height:1px;background:#a0a0a0"></div>
<div class="b" style="left:349.00px;top:114.60px;width:1px;height:18px;background:#a0a0a0"></div>
<div class="b" style="left:351.00px;top:130.60px;width:17px;height:1px;background:#a0a0a0"></div>
<div class="b" style="left:368.00px;top:114.60px;width:1px;height:18px;background:#a0a0a0"></div>
<div class="b" style="left:370.00px;top:130.60px;width:17px;height:1px;background:#a0a0a0"></div>
<div class="b" style="left:387.00px;top:114.60px;width:1px;height:18px;background:#a0a0a0"></div>
<div class="b" style="left:389.00px;top:130.60px;width:17px;height:1px;background:#a0a0a0"></div>
<div class="b" style="left:406.00px;top:114.60px;width:1px;height:18px;background:#a0a0a0"></div>
<div class="b" style="left:408.00px;top:130.60px;width:17px;height:1px;background:#a0a0a0"></div>
<div class="b" style="left:425.00px;top:114.60px;width:1px;height:18px;background:#a0a0a0"></div>
<div class="b" style="left:427.00px;top:130.60px;width:17px;height:1px;background:#a0a0a0"></div>
<div class="b" style="left:444.00px;top:114.60px;width:1px;height:18px;background:#a0a0a0"></div>
<div class="b" style="left:446.00px;top:130.60px;width:17px;height:1px;background:#a0a0a0"></div>
<div class="b" style="left:463.00px;top:114.60px;width:1px;height:18px;background:#a0a0a0"></div>
<div class="b" style="left:464.00px;top:130.60px;width:18px;height:1px;background:#a0a0a0"></div>
<div class="b" style="left:482.00px;top:114.60px;width:1px;height:18px;background:#a0a0a0"></div>
<div class="b" style="left:483.00px;top:130.60px;width:18px;height:1px;background:#a0a0a0"></div>
<div class="b" style="left:500.00px;top:114.60px;width:1px;height:18px;background:#a0a0a0"></div>
<div class="b" style="left:502.00px;top:130.60px;width:17px;height:1px;background:#a0a0a0"></div>
<div class="b" style="left:519.00px;top:114.60px;width:1px;height:18px;background:#a0a0a0"></div>
<div class="b" style="left:521.00px;top:130.60px;width:17px;height:1px;background:#a0a0a0"></div>
<div class="b" style="left:538.00px;top:114.60px;width:1px;height:18px;background:#a0a0a0"></div>
<div class="b" style="left:540.00px;top:130.60px;width:17px;height:1px;background:#a0a0a0"></div>
<div class="b" style="left:557.00px;top:114.60px;width:1px;height:18px;background:#a0a0a0"></div>
<div class="b" style="left:559.00px;top:130.60px;width:17px;height:1px;background:#a0a0a0"></div>
<div class="b" style="left:576.00px;top:114.60px;width:1px;height:18px;background:#a0a0a0"></div>
<div class="b" style="left:578.00px;top:130.60px;width:17px;height:1px;background:#a0a0a0"></div>
<div class="b" style="left:595.00px;top:114.60px;width:1px;height:18px;background:#a0a0a0"></div>
<div class="b" style="left:597.00px;top:130.60px;width:17px;height:1px;background:#a0a0a0"></div>
<div class="b" style="left:614.00px;top:114.60px;width:1px;height:18px;background:#a0a0a0"></div>
<div class="b" style="left:616.00px;top:130.60px;width:17px;height:1px;background:#a0a0a0"></div>
<div class="b" style="left:633.00px;top:114.60px;width:1px;height:18px;background:#a0a0a0"></div>
<div class="b" style="left:635.00px;top:130.60px;width:17px;height:1px;background:#a0a0a0"></div>
<div class="b" style="left:652.00px;top:114.60px;width:1px;height:18px;background:#a0a0a0"></div>
<div class="b" style="left:653.00px;top:130.60px;width:18px;height:1px;background:#a0a0a0"></div>
<div class="b" style="left:671.00px;top:114.60px;width:1px;height:18px;background:#a0a0a0"></div>
<div class="b" style="left:672.00px;top:130.60px;width:18px;height:1px;background:#a0a0a0"></div>
<div class="b" style="left:689.00px;top:114.60px;width:1px;height:18px;background:#a0a0a0"></div>
<div class="b" style="left:691.00px;top:130.60px;width:17px;height:1px;background:#a0a0a0"></div>
<div class="b" style="left:708.00px;top:114.60px;width:1px;height:18px;background:#a0a0a0"></div>
<div class="b" style="left:710.00px;top:130.60px;width:17px;height:1px;background:#a0a0a0"></div>
<div class="b" style="left:727.00px;top:114.60px;width:1px;height:18px;background:#a0a0a0"></div>
<div class="b" style="left:729.00px;top:130.60px;width:17px;height:1px;background:#a0a0a0"></div>
<div class="b" style="left:748.00px;top:116.60px;width:1px;height:15px;background:#a0a0a0"></div>
<div class="b" style="left:2.00px;top:137.60px;width:51px;height:1px;background:#a0a0a0"></div>
<div class="b" style="left:2.00px;top:137.60px;width:1px;height:18px;background:#a0a0a0"></div>
<div class="b" style="left:51.00px;top:139.60px;width:1px;height:15px;background:#a0a0a0"></div>
<div class="b" style="left:3.00px;top:153.60px;width:49px;height:1px;background:#a0a0a0"></div>
<div class="t" style="left:5.50px;top:141.09px;font-size:11px;color:#000;font-weight:normal;">107</div>
<div class="b" style="left:55.00px;top:137.60px;width:104px;height:1px;background:#a0a0a0"></div>
<div class="b" style="left:55.00px;top:137.60px;width:1px;height:18px;background:#a0a0a0"></div>
<div class="b" style="left:157.00px;top:139.60px;width:1px;height:15px;background:#a0a0a0"></div>
<div class="b" style="left:57.00px;top:153.60px;width:101px;height:1px;background:#a0a0a0"></div>
<div class="t" style="left:58.299999999999955px;top:140.99px;width:97px;overflow:hidden;font-size:10.8px;color:#000">ΔΩΜ.ΔΙΚΛ. (Ε)</div>
<div class="b" style="left:160.00px;top:137.60px;width:589px;height:1px;background:#a0a0a0"></div>
<div class="b" style="left:160.00px;top:137.60px;width:1px;height:18px;background:#a0a0a0"></div>
<div class="b" style="left:162.00px;top:153.60px;width:17px;height:1px;background:#a0a0a0"></div>
<div class="b" style="left:179.00px;top:137.60px;width:1px;height:18px;background:#a0a0a0"></div>
<div class="b" style="left:181.00px;top:153.60px;width:17px;height:1px;background:#a0a0a0"></div>
<div class="b" style="left:198.00px;top:137.60px;width:1px;height:18px;background:#a0a0a0"></div>
<div class="b" style="left:200.00px;top:153.60px;width:17px;height:1px;background:#a0a0a0"></div>
<div class="b" style="left:217.00px;top:137.60px;width:1px;height:18px;background:#a0a0a0"></div>
<div class="b" style="left:219.00px;top:153.60px;width:17px;height:1px;background:#a0a0a0"></div>
<div class="b" style="left:236.00px;top:137.60px;width:1px;height:18px;background:#a0a0a0"></div>
<div class="b" style="left:238.00px;top:153.60px;width:17px;height:1px;background:#a0a0a0"></div>
<div class="b" style="left:238.00px;top:139.60px;width:17px;height:14px;background:#FFFF00"></div>
<div class="t" style="left:237.81px;top:140.09px;font-size:12.3px;color:#000;font-weight:bold;letter-spacing:-0.6px">&lt;A</div>
<div class="b" style="left:255.00px;top:137.60px;width:1px;height:18px;background:#a0a0a0"></div>
<div class="b" style="left:257.00px;top:153.60px;width:17px;height:1px;background:#a0a0a0"></div>
<div class="b" style="left:274.00px;top:137.60px;width:1px;height:18px;background:#a0a0a0"></div>
<div class="b" style="left:275.00px;top:153.60px;width:18px;height:1px;background:#a0a0a0"></div>
<div class="b" style="left:293.00px;top:137.60px;width:1px;height:18px;background:#a0a0a0"></div>
<div class="b" style="left:294.00px;top:153.60px;width:18px;height:1px;background:#a0a0a0"></div>
<div class="b" style="left:311.00px;top:137.60px;width:1px;height:18px;background:#a0a0a0"></div>
<div class="b" style="left:313.00px;top:153.60px;width:17px;height:1px;background:#a0a0a0"></div>
<div class="b" style="left:330.00px;top:137.60px;width:1px;height:18px;background:#a0a0a0"></div>
<div class="b" style="left:332.00px;top:153.60px;width:17px;height:1px;background:#a0a0a0"></div>
<div class="b" style="left:349.00px;top:137.60px;width:1px;height:18px;background:#a0a0a0"></div>
<div class="b" style="left:351.00px;top:153.60px;width:17px;height:1px;background:#a0a0a0"></div>
<div class="b" style="left:368.00px;top:137.60px;width:1px;height:18px;background:#a0a0a0"></div>
<div class="b" style="left:370.00px;top:153.60px;width:17px;height:1px;background:#a0a0a0"></div>
<div class="b" style="left:387.00px;top:137.60px;width:1px;height:18px;background:#a0a0a0"></div>
<div class="b" style="left:389.00px;top:153.60px;width:17px;height:1px;background:#a0a0a0"></div>
<div class="b" style="left:406.00px;top:137.60px;width:1px;height:18px;background:#a0a0a0"></div>
<div class="b" style="left:408.00px;top:153.60px;width:17px;height:1px;background:#a0a0a0"></div>
<div class="b" style="left:425.00px;top:137.60px;width:1px;height:18px;background:#a0a0a0"></div>
<div class="b" style="left:427.00px;top:153.60px;width:17px;height:1px;background:#a0a0a0"></div>
<div class="b" style="left:444.00px;top:137.60px;width:1px;height:18px;background:#a0a0a0"></div>
<div class="b" style="left:446.00px;top:153.60px;width:17px;height:1px;background:#a0a0a0"></div>
<div class="b" style="left:463.00px;top:137.60px;width:1px;height:18px;background:#a0a0a0"></div>
<div class="b" style="left:464.00px;top:153.60px;width:18px;height:1px;background:#a0a0a0"></div>
<div class="b" style="left:482.00px;top:137.60px;width:1px;height:18px;background:#a0a0a0"></div>
<div class="b" style="left:483.00px;top:153.60px;width:18px;height:1px;background:#a0a0a0"></div>
<div class="b" style="left:500.00px;top:137.60px;width:1px;height:18px;background:#a0a0a0"></div>
<div class="b" style="left:502.00px;top:153.60px;width:17px;height:1px;background:#a0a0a0"></div>
<div class="b" style="left:519.00px;top:137.60px;width:1px;height:18px;background:#a0a0a0"></div>
<div class="b" style="left:521.00px;top:153.60px;width:17px;height:1px;background:#a0a0a0"></div>
<div class="b" style="left:538.00px;top:137.60px;width:1px;height:18px;background:#a0a0a0"></div>
<div class="b" style="left:540.00px;top:153.60px;width:17px;height:1px;background:#a0a0a0"></div>
<div class="b" style="left:557.00px;top:137.60px;width:1px;height:18px;background:#a0a0a0"></div>
<div class="b" style="left:559.00px;top:153.60px;width:17px;height:1px;background:#a0a0a0"></div>
<div class="b" style="left:576.00px;top:137.60px;width:1px;height:18px;background:#a0a0a0"></div>
<div class="b" style="left:578.00px;top:153.60px;width:17px;height:1px;background:#a0a0a0"></div>
<div class="b" style="left:595.00px;top:137.60px;width:1px;height:18px;background:#a0a0a0"></div>
<div class="b" style="left:597.00px;top:153.60px;width:17px;height:1px;background:#a0a0a0"></div>
<div class="b" style="left:614.00px;top:137.60px;width:1px;height:18px;background:#a0a0a0"></div>
<div class="b" style="left:616.00px;top:153.60px;width:17px;height:1px;background:#a0a0a0"></div>
<div class="b" style="left:633.00px;top:137.60px;width:1px;height:18px;background:#a0a0a0"></div>
<div class="b" style="left:635.00px;top:153.60px;width:17px;height:1px;background:#a0a0a0"></div>
<div class="b" style="left:652.00px;top:137.60px;width:1px;height:18px;background:#a0a0a0"></div>
<div class="b" style="left:653.00px;top:153.60px;width:18px;height:1px;background:#a0a0a0"></div>
<div class="b" style="left:671.00px;top:137.60px;width:1px;height:18px;background:#a0a0a0"></div>
<div class="b" style="left:672.00px;top:153.60px;width:18px;height:1px;background:#a0a0a0"></div>
<div class="b" style="left:689.00px;top:137.60px;width:1px;height:18px;background:#a0a0a0"></div>
<div class="b" style="left:691.00px;top:153.60px;width:17px;height:1px;background:#a0a0a0"></div>
<div class="b" style="left:708.00px;top:137.60px;width:1px;height:18px;background:#a0a0a0"></div>
<div class="b" style="left:710.00px;top:153.60px;width:17px;height:1px;background:#a0a0a0"></div>
<div class="b" style="left:727.00px;top:137.60px;width:1px;height:18px;background:#a0a0a0"></div>
<div class="b" style="left:729.00px;top:153.60px;width:17px;height:1px;background:#a0a0a0"></div>
<div class="b" style="left:748.00px;top:139.60px;width:1px;height:15px;background:#a0a0a0"></div>
<div class="b" style="left:2.00px;top:160.60px;width:51px;height:1px;background:#a0a0a0"></div>
<div class="b" style="left:2.00px;top:160.60px;width:1px;height:17px;background:#a0a0a0"></div>
<div class="b" style="left:51.00px;top:162.60px;width:1px;height:14px;background:#a0a0a0"></div>
<div class="b" style="left:3.00px;top:175.60px;width:49px;height:1px;background:#a0a0a0"></div>
<div class="t" style="left:5.50px;top:163.76px;font-size:11px;color:#000;font-weight:normal;">108</div>
<div class="b" style="left:55.00px;top:160.60px;width:104px;height:1px;background:#a0a0a0"></div>
<div class="b" style="left:55.00px;top:160.60px;width:1px;height:17px;background:#a0a0a0"></div>
<div class="b" style="left:157.00px;top:162.60px;width:1px;height:14px;background:#a0a0a0"></div>
<div class="b" style="left:57.00px;top:175.60px;width:101px;height:1px;background:#a0a0a0"></div>
<div class="t" style="left:58.299999999999955px;top:163.66px;width:97px;overflow:hidden;font-size:10.8px;color:#000">ΔΩΜ.ΔΙΚΛ.ΦΑΡΔΥ (ΔΙΠΛΟ)</div>
<div class="b" style="left:160.00px;top:160.60px;width:589px;height:1px;background:#a0a0a0"></div>
<div class="b" style="left:160.00px;top:160.60px;width:1px;height:17px;background:#a0a0a0"></div>
<div class="b" style="left:162.00px;top:175.60px;width:17px;height:1px;background:#a0a0a0"></div>
<div class="b" style="left:179.00px;top:160.60px;width:1px;height:17px;background:#a0a0a0"></div>
<div class="b" style="left:181.00px;top:175.60px;width:17px;height:1px;background:#a0a0a0"></div>
<div class="b" style="left:198.00px;top:160.60px;width:1px;height:17px;background:#a0a0a0"></div>
<div class="b" style="left:200.00px;top:175.60px;width:17px;height:1px;background:#a0a0a0"></div>
<div class="b" style="left:217.00px;top:160.60px;width:1px;height:17px;background:#a0a0a0"></div>
<div class="b" style="left:219.00px;top:175.60px;width:17px;height:1px;background:#a0a0a0"></div>
<div class="b" style="left:236.00px;top:160.60px;width:1px;height:17px;background:#a0a0a0"></div>
<div class="b" style="left:238.00px;top:175.60px;width:17px;height:1px;background:#a0a0a0"></div>
<div class="b" style="left:238.00px;top:162.60px;width:17px;height:14px;background:#FFFF00"></div>
<div class="t" style="left:237.81px;top:162.76px;font-size:12.3px;color:#000;font-weight:bold;letter-spacing:-0.6px">&lt;A</div>
<div class="b" style="left:255.00px;top:160.60px;width:1px;height:17px;background:#a0a0a0"></div>
<div class="b" style="left:257.00px;top:175.60px;width:17px;height:1px;background:#a0a0a0"></div>
<div class="b" style="left:274.00px;top:160.60px;width:1px;height:17px;background:#a0a0a0"></div>
<div class="b" style="left:275.00px;top:175.60px;width:18px;height:1px;background:#a0a0a0"></div>
<div class="b" style="left:293.00px;top:160.60px;width:1px;height:17px;background:#a0a0a0"></div>
<div class="b" style="left:294.00px;top:175.60px;width:18px;height:1px;background:#a0a0a0"></div>
<div class="b" style="left:311.00px;top:160.60px;width:1px;height:17px;background:#a0a0a0"></div>
<div class="b" style="left:313.00px;top:175.60px;width:17px;height:1px;background:#a0a0a0"></div>
<div class="b" style="left:330.00px;top:160.60px;width:1px;height:17px;background:#a0a0a0"></div>
<div class="b" style="left:332.00px;top:175.60px;width:17px;height:1px;background:#a0a0a0"></div>
<div class="b" style="left:349.00px;top:160.60px;width:1px;height:17px;background:#a0a0a0"></div>
<div class="b" style="left:351.00px;top:175.60px;width:17px;height:1px;background:#a0a0a0"></div>
<div class="b" style="left:368.00px;top:160.60px;width:1px;height:17px;background:#a0a0a0"></div>
<div class="b" style="left:370.00px;top:175.60px;width:17px;height:1px;background:#a0a0a0"></div>
<div class="b" style="left:387.00px;top:160.60px;width:1px;height:17px;background:#a0a0a0"></div>
<div class="b" style="left:389.00px;top:175.60px;width:17px;height:1px;background:#a0a0a0"></div>
<div class="b" style="left:406.00px;top:160.60px;width:1px;height:17px;background:#a0a0a0"></div>
<div class="b" style="left:408.00px;top:175.60px;width:17px;height:1px;background:#a0a0a0"></div>
<div class="b" style="left:425.00px;top:160.60px;width:1px;height:17px;background:#a0a0a0"></div>
<div class="b" style="left:427.00px;top:175.60px;width:17px;height:1px;background:#a0a0a0"></div>
<div class="b" style="left:444.00px;top:160.60px;width:1px;height:17px;background:#a0a0a0"></div>
<div class="b" style="left:446.00px;top:175.60px;width:17px;height:1px;background:#a0a0a0"></div>
<div class="b" style="left:463.00px;top:160.60px;width:1px;height:17px;background:#a0a0a0"></div>
<div class="b" style="left:464.00px;top:175.60px;width:18px;height:1px;background:#a0a0a0"></div>
<div class="b" style="left:482.00px;top:160.60px;width:1px;height:17px;background:#a0a0a0"></div>
<div class="b" style="left:483.00px;top:175.60px;width:18px;height:1px;background:#a0a0a0"></div>
<div class="b" style="left:500.00px;top:160.60px;width:1px;height:17px;background:#a0a0a0"></div>
<div class="b" style="left:502.00px;top:175.60px;width:17px;height:1px;background:#a0a0a0"></div>
<div class="b" style="left:519.00px;top:160.60px;width:1px;height:17px;background:#a0a0a0"></div>
<div class="b" style="left:521.00px;top:175.60px;width:17px;height:1px;background:#a0a0a0"></div>
<div class="b" style="left:538.00px;top:160.60px;width:1px;height:17px;background:#a0a0a0"></div>
<div class="b" style="left:540.00px;top:175.60px;width:17px;height:1px;background:#a0a0a0"></div>
<div class="b" style="left:557.00px;top:160.60px;width:1px;height:17px;background:#a0a0a0"></div>
<div class="b" style="left:559.00px;top:175.60px;width:17px;height:1px;background:#a0a0a0"></div>
<div class="b" style="left:576.00px;top:160.60px;width:1px;height:17px;background:#a0a0a0"></div>
<div class="b" style="left:578.00px;top:175.60px;width:17px;height:1px;background:#a0a0a0"></div>
<div class="b" style="left:595.00px;top:160.60px;width:1px;height:17px;background:#a0a0a0"></div>
<div class="b" style="left:597.00px;top:175.60px;width:17px;height:1px;background:#a0a0a0"></div>
<div class="b" style="left:614.00px;top:160.60px;width:1px;height:17px;background:#a0a0a0"></div>
<div class="b" style="left:616.00px;top:175.60px;width:17px;height:1px;background:#a0a0a0"></div>
<div class="b" style="left:633.00px;top:160.60px;width:1px;height:17px;background:#a0a0a0"></div>
<div class="b" style="left:635.00px;top:175.60px;width:17px;height:1px;background:#a0a0a0"></div>
<div class="b" style="left:652.00px;top:160.60px;width:1px;height:17px;background:#a0a0a0"></div>
<div class="b" style="left:653.00px;top:175.60px;width:18px;height:1px;background:#a0a0a0"></div>
<div class="b" style="left:671.00px;top:160.60px;width:1px;height:17px;background:#a0a0a0"></div>
<div class="b" style="left:672.00px;top:175.60px;width:18px;height:1px;background:#a0a0a0"></div>
<div class="b" style="left:689.00px;top:160.60px;width:1px;height:17px;background:#a0a0a0"></div>
<div class="b" style="left:691.00px;top:175.60px;width:17px;height:1px;background:#a0a0a0"></div>
<div class="b" style="left:708.00px;top:160.60px;width:1px;height:17px;background:#a0a0a0"></div>
<div class="b" style="left:710.00px;top:175.60px;width:17px;height:1px;background:#a0a0a0"></div>
<div class="b" style="left:727.00px;top:160.60px;width:1px;height:17px;background:#a0a0a0"></div>
<div class="b" style="left:729.00px;top:175.60px;width:17px;height:1px;background:#a0a0a0"></div>
<div class="b" style="left:748.00px;top:162.60px;width:1px;height:14px;background:#a0a0a0"></div>
<div class="b" style="left:2.00px;top:182.60px;width:51px;height:1px;background:#a0a0a0"></div>
<div class="b" style="left:2.00px;top:182.60px;width:1px;height:18px;background:#a0a0a0"></div>
<div class="b" style="left:51.00px;top:184.60px;width:1px;height:15px;background:#a0a0a0"></div>
<div class="b" style="left:3.00px;top:198.60px;width:49px;height:1px;background:#a0a0a0"></div>
<div class="t" style="left:5.50px;top:186.42px;font-size:11px;color:#000;font-weight:normal;">109</div>
<div class="b" style="left:55.00px;top:182.60px;width:104px;height:1px;background:#a0a0a0"></div>
<div class="b" style="left:55.00px;top:182.60px;width:1px;height:18px;background:#a0a0a0"></div>
<div class="b" style="left:157.00px;top:184.60px;width:1px;height:15px;background:#a0a0a0"></div>
<div class="b" style="left:57.00px;top:198.60px;width:101px;height:1px;background:#a0a0a0"></div>
<div class="t" style="left:58.299999999999955px;top:186.32px;width:97px;overflow:hidden;font-size:10.8px;color:#000">ΔΩΜ.ΔΙΚΛ. (Ε)</div>
<div class="b" style="left:160.00px;top:182.60px;width:589px;height:1px;background:#a0a0a0"></div>
<div class="b" style="left:160.00px;top:182.60px;width:1px;height:18px;background:#a0a0a0"></div>
<div class="b" style="left:162.00px;top:198.60px;width:17px;height:1px;background:#a0a0a0"></div>
<div class="b" style="left:179.00px;top:182.60px;width:1px;height:18px;background:#a0a0a0"></div>
<div class="b" style="left:181.00px;top:198.60px;width:17px;height:1px;background:#a0a0a0"></div>
<div class="b" style="left:198.00px;top:182.60px;width:1px;height:18px;background:#a0a0a0"></div>
<div class="b" style="left:200.00px;top:198.60px;width:17px;height:1px;background:#a0a0a0"></div>
<div class="b" style="left:217.00px;top:182.60px;width:1px;height:18px;background:#a0a0a0"></div>
<div class="b" style="left:219.00px;top:198.60px;width:17px;height:1px;background:#a0a0a0"></div>
<div class="b" style="left:236.00px;top:182.60px;width:1px;height:18px;background:#a0a0a0"></div>
<div class="b" style="left:238.00px;top:198.60px;width:17px;height:1px;background:#a0a0a0"></div>
<div class="b" style="left:255.00px;top:182.60px;width:1px;height:18px;background:#a0a0a0"></div>
<div class="b" style="left:257.00px;top:198.60px;width:17px;height:1px;background:#a0a0a0"></div>
<div class="b" style="left:274.00px;top:182.60px;width:1px;height:18px;background:#a0a0a0"></div>
<div class="b" style="left:275.00px;top:198.60px;width:18px;height:1px;background:#a0a0a0"></div>
<div class="b" style="left:293.00px;top:182.60px;width:1px;height:18px;background:#a0a0a0"></div>
<div class="b" style="left:294.00px;top:198.60px;width:18px;height:1px;background:#a0a0a0"></div>
<div class="b" style="left:311.00px;top:182.60px;width:1px;height:18px;background:#a0a0a0"></div>
<div class="b" style="left:313.00px;top:198.60px;width:17px;height:1px;background:#a0a0a0"></div>
<div class="b" style="left:330.00px;top:182.60px;width:1px;height:18px;background:#a0a0a0"></div>
<div class="b" style="left:332.00px;top:198.60px;width:17px;height:1px;background:#a0a0a0"></div>
<div class="b" style="left:349.00px;top:182.60px;width:1px;height:18px;background:#a0a0a0"></div>
<div class="b" style="left:351.00px;top:198.60px;width:17px;height:1px;background:#a0a0a0"></div>
<div class="b" style="left:368.00px;top:182.60px;width:1px;height:18px;background:#a0a0a0"></div>
<div class="b" style="left:370.00px;top:198.60px;width:17px;height:1px;background:#a0a0a0"></div>
<div class="b" style="left:387.00px;top:182.60px;width:1px;height:18px;background:#a0a0a0"></div>
<div class="b" style="left:389.00px;top:198.60px;width:17px;height:1px;background:#a0a0a0"></div>
<div class="b" style="left:406.00px;top:182.60px;width:1px;height:18px;background:#a0a0a0"></div>
<div class="b" style="left:408.00px;top:198.60px;width:17px;height:1px;background:#a0a0a0"></div>
<div class="b" style="left:425.00px;top:182.60px;width:1px;height:18px;background:#a0a0a0"></div>
<div class="b" style="left:427.00px;top:198.60px;width:17px;height:1px;background:#a0a0a0"></div>
<div class="b" style="left:444.00px;top:182.60px;width:1px;height:18px;background:#a0a0a0"></div>
<div class="b" style="left:446.00px;top:198.60px;width:17px;height:1px;background:#a0a0a0"></div>
<div class="b" style="left:463.00px;top:182.60px;width:1px;height:18px;background:#a0a0a0"></div>
<div class="b" style="left:464.00px;top:198.60px;width:18px;height:1px;background:#a0a0a0"></div>
<div class="b" style="left:482.00px;top:182.60px;width:1px;height:18px;background:#a0a0a0"></div>
<div class="b" style="left:483.00px;top:198.60px;width:18px;height:1px;background:#a0a0a0"></div>
<div class="b" style="left:500.00px;top:182.60px;width:1px;height:18px;background:#a0a0a0"></div>
<div class="b" style="left:502.00px;top:198.60px;width:17px;height:1px;background:#a0a0a0"></div>
<div class="b" style="left:519.00px;top:182.60px;width:1px;height:18px;background:#a0a0a0"></div>
<div class="b" style="left:521.00px;top:198.60px;width:17px;height:1px;background:#a0a0a0"></div>
<div class="b" style="left:538.00px;top:182.60px;width:1px;height:18px;background:#a0a0a0"></div>
<div class="b" style="left:540.00px;top:198.60px;width:17px;height:1px;background:#a0a0a0"></div>
<div class="b" style="left:557.00px;top:182.60px;width:1px;height:18px;background:#a0a0a0"></div>
<div class="b" style="left:559.00px;top:198.60px;width:17px;height:1px;background:#a0a0a0"></div>
<div class="b" style="left:576.00px;top:182.60px;width:1px;height:18px;background:#a0a0a0"></div>
<div class="b" style="left:578.00px;top:198.60px;width:17px;height:1px;background:#a0a0a0"></div>
<div class="b" style="left:595.00px;top:182.60px;width:1px;height:18px;background:#a0a0a0"></div>
<div class="b" style="left:597.00px;top:198.60px;width:17px;height:1px;background:#a0a0a0"></div>
<div class="b" style="left:614.00px;top:182.60px;width:1px;height:18px;background:#a0a0a0"></div>
<div class="b" style="left:616.00px;top:198.60px;width:17px;height:1px;background:#a0a0a0"></div>
<div class="b" style="left:633.00px;top:182.60px;width:1px;height:18px;background:#a0a0a0"></div>
<div class="b" style="left:635.00px;top:198.60px;width:17px;height:1px;background:#a0a0a0"></div>
<div class="b" style="left:652.00px;top:182.60px;width:1px;height:18px;background:#a0a0a0"></div>
<div class="b" style="left:653.00px;top:198.60px;width:18px;height:1px;background:#a0a0a0"></div>
<div class="b" style="left:671.00px;top:182.60px;width:1px;height:18px;background:#a0a0a0"></div>
<div class="b" style="left:672.00px;top:198.60px;width:18px;height:1px;background:#a0a0a0"></div>
<div class="b" style="left:689.00px;top:182.60px;width:1px;height:18px;background:#a0a0a0"></div>
<div class="b" style="left:691.00px;top:198.60px;width:17px;height:1px;background:#a0a0a0"></div>
<div class="b" style="left:708.00px;top:182.60px;width:1px;height:18px;background:#a0a0a0"></div>
<div class="b" style="left:710.00px;top:198.60px;width:17px;height:1px;background:#a0a0a0"></div>
<div class="b" style="left:727.00px;top:182.60px;width:1px;height:18px;background:#a0a0a0"></div>
<div class="b" style="left:729.00px;top:198.60px;width:17px;height:1px;background:#a0a0a0"></div>
<div class="b" style="left:748.00px;top:184.60px;width:1px;height:15px;background:#a0a0a0"></div>
<div class="b" style="left:2.00px;top:205.60px;width:51px;height:1px;background:#a0a0a0"></div>
<div class="b" style="left:2.00px;top:205.60px;width:1px;height:18px;background:#a0a0a0"></div>
<div class="b" style="left:51.00px;top:207.60px;width:1px;height:15px;background:#a0a0a0"></div>
<div class="b" style="left:3.00px;top:221.60px;width:49px;height:1px;background:#a0a0a0"></div>
<div class="t" style="left:5.50px;top:209.09px;font-size:11px;color:#000;font-weight:normal;">110</div>
<div class="b" style="left:55.00px;top:205.60px;width:104px;height:1px;background:#a0a0a0"></div>
<div class="b" style="left:55.00px;top:205.60px;width:1px;height:18px;background:#a0a0a0"></div>
<div class="b" style="left:157.00px;top:207.60px;width:1px;height:15px;background:#a0a0a0"></div>
<div class="b" style="left:57.00px;top:221.60px;width:101px;height:1px;background:#a0a0a0"></div>
<div class="t" style="left:58.299999999999955px;top:208.99px;width:97px;overflow:hidden;font-size:10.8px;color:#000">ΔΩΜ.ΔΙΚΛ.ΦΑΡΔΥ (ΔΙΠΛΟ)</div>
<div class="b" style="left:160.00px;top:205.60px;width:589px;height:1px;background:#a0a0a0"></div>
<div class="b" style="left:160.00px;top:205.60px;width:1px;height:18px;background:#a0a0a0"></div>
<div class="b" style="left:162.00px;top:221.60px;width:17px;height:1px;background:#a0a0a0"></div>
<div class="b" style="left:179.00px;top:205.60px;width:1px;height:18px;background:#a0a0a0"></div>
<div class="b" style="left:181.00px;top:221.60px;width:17px;height:1px;background:#a0a0a0"></div>
<div class="b" style="left:198.00px;top:205.60px;width:1px;height:18px;background:#a0a0a0"></div>
<div class="b" style="left:200.00px;top:221.60px;width:17px;height:1px;background:#a0a0a0"></div>
<div class="b" style="left:217.00px;top:205.60px;width:1px;height:18px;background:#a0a0a0"></div>
<div class="b" style="left:219.00px;top:221.60px;width:17px;height:1px;background:#a0a0a0"></div>
<div class="b" style="left:236.00px;top:205.60px;width:1px;height:18px;background:#a0a0a0"></div>
<div class="b" style="left:238.00px;top:221.60px;width:17px;height:1px;background:#a0a0a0"></div>
<div class="b" style="left:255.00px;top:205.60px;width:1px;height:18px;background:#a0a0a0"></div>
<div class="b" style="left:257.00px;top:221.60px;width:17px;height:1px;background:#a0a0a0"></div>
<div class="b" style="left:274.00px;top:205.60px;width:1px;height:18px;background:#a0a0a0"></div>
<div class="b" style="left:275.00px;top:221.60px;width:18px;height:1px;background:#a0a0a0"></div>
<div class="b" style="left:293.00px;top:205.60px;width:1px;height:18px;background:#a0a0a0"></div>
<div class="b" style="left:294.00px;top:221.60px;width:18px;height:1px;background:#a0a0a0"></div>
<div class="b" style="left:311.00px;top:205.60px;width:1px;height:18px;background:#a0a0a0"></div>
<div class="b" style="left:313.00px;top:221.60px;width:17px;height:1px;background:#a0a0a0"></div>
<div class="b" style="left:330.00px;top:205.60px;width:1px;height:18px;background:#a0a0a0"></div>
<div class="b" style="left:332.00px;top:221.60px;width:17px;height:1px;background:#a0a0a0"></div>
<div class="b" style="left:349.00px;top:205.60px;width:1px;height:18px;background:#a0a0a0"></div>
<div class="b" style="left:351.00px;top:221.60px;width:17px;height:1px;background:#a0a0a0"></div>
<div class="b" style="left:368.00px;top:205.60px;width:1px;height:18px;background:#a0a0a0"></div>
<div class="b" style="left:370.00px;top:221.60px;width:17px;height:1px;background:#a0a0a0"></div>
<div class="b" style="left:387.00px;top:205.60px;width:1px;height:18px;background:#a0a0a0"></div>
<div class="b" style="left:389.00px;top:221.60px;width:17px;height:1px;background:#a0a0a0"></div>
<div class="b" style="left:406.00px;top:205.60px;width:1px;height:18px;background:#a0a0a0"></div>
<div class="b" style="left:408.00px;top:221.60px;width:17px;height:1px;background:#a0a0a0"></div>
<div class="b" style="left:425.00px;top:205.60px;width:1px;height:18px;background:#a0a0a0"></div>
<div class="b" style="left:427.00px;top:221.60px;width:17px;height:1px;background:#a0a0a0"></div>
<div class="b" style="left:444.00px;top:205.60px;width:1px;height:18px;background:#a0a0a0"></div>
<div class="b" style="left:446.00px;top:221.60px;width:17px;height:1px;background:#a0a0a0"></div>
<div class="b" style="left:463.00px;top:205.60px;width:1px;height:18px;background:#a0a0a0"></div>
<div class="b" style="left:464.00px;top:221.60px;width:18px;height:1px;background:#a0a0a0"></div>
<div class="b" style="left:482.00px;top:205.60px;width:1px;height:18px;background:#a0a0a0"></div>
<div class="b" style="left:483.00px;top:221.60px;width:18px;height:1px;background:#a0a0a0"></div>
<div class="b" style="left:500.00px;top:205.60px;width:1px;height:18px;background:#a0a0a0"></div>
<div class="b" style="left:502.00px;top:221.60px;width:17px;height:1px;background:#a0a0a0"></div>
<div class="b" style="left:519.00px;top:205.60px;width:1px;height:18px;background:#a0a0a0"></div>
<div class="b" style="left:521.00px;top:221.60px;width:17px;height:1px;background:#a0a0a0"></div>
<div class="b" style="left:538.00px;top:205.60px;width:1px;height:18px;background:#a0a0a0"></div>
<div class="b" style="left:540.00px;top:221.60px;width:17px;height:1px;background:#a0a0a0"></div>
<div class="b" style="left:557.00px;top:205.60px;width:1px;height:18px;background:#a0a0a0"></div>
<div class="b" style="left:559.00px;top:221.60px;width:17px;height:1px;background:#a0a0a0"></div>
<div class="b" style="left:576.00px;top:205.60px;width:1px;height:18px;background:#a0a0a0"></div>
<div class="b" style="left:578.00px;top:221.60px;width:17px;height:1px;background:#a0a0a0"></div>
<div class="b" style="left:595.00px;top:205.60px;width:1px;height:18px;background:#a0a0a0"></div>
<div class="b" style="left:597.00px;top:221.60px;width:17px;height:1px;background:#a0a0a0"></div>
<div class="b" style="left:614.00px;top:205.60px;width:1px;height:18px;background:#a0a0a0"></div>
<div class="b" style="left:616.00px;top:221.60px;width:17px;height:1px;background:#a0a0a0"></div>
<div class="b" style="left:633.00px;top:205.60px;width:1px;height:18px;background:#a0a0a0"></div>
<div class="b" style="left:635.00px;top:221.60px;width:17px;height:1px;background:#a0a0a0"></div>
<div class="b" style="left:652.00px;top:205.60px;width:1px;height:18px;background:#a0a0a0"></div>
<div class="b" style="left:653.00px;top:221.60px;width:18px;height:1px;background:#a0a0a0"></div>
<div class="b" style="left:671.00px;top:205.60px;width:1px;height:18px;background:#a0a0a0"></div>
<div class="b" style="left:672.00px;top:221.60px;width:18px;height:1px;background:#a0a0a0"></div>
<div class="b" style="left:689.00px;top:205.60px;width:1px;height:18px;background:#a0a0a0"></div>
<div class="b" style="left:691.00px;top:221.60px;width:17px;height:1px;background:#a0a0a0"></div>
<div class="b" style="left:708.00px;top:205.60px;width:1px;height:18px;background:#a0a0a0"></div>
<div class="b" style="left:710.00px;top:221.60px;width:17px;height:1px;background:#a0a0a0"></div>
<div class="b" style="left:727.00px;top:205.60px;width:1px;height:18px;background:#a0a0a0"></div>
<div class="b" style="left:729.00px;top:221.60px;width:17px;height:1px;background:#a0a0a0"></div>
<div class="b" style="left:748.00px;top:207.60px;width:1px;height:15px;background:#a0a0a0"></div>
<div class="b" style="left:2.00px;top:228.60px;width:51px;height:1px;background:#a0a0a0"></div>
<div class="b" style="left:2.00px;top:228.60px;width:1px;height:17px;background:#a0a0a0"></div>
<div class="b" style="left:51.00px;top:230.60px;width:1px;height:14px;background:#a0a0a0"></div>
<div class="b" style="left:3.00px;top:243.60px;width:49px;height:1px;background:#a0a0a0"></div>
<div class="t" style="left:5.50px;top:231.76px;font-size:11px;color:#000;font-weight:normal;">201</div>
<div class="b" style="left:55.00px;top:228.60px;width:104px;height:1px;background:#a0a0a0"></div>
<div class="b" style="left:55.00px;top:228.60px;width:1px;height:17px;background:#a0a0a0"></div>
<div class="b" style="left:157.00px;top:230.60px;width:1px;height:14px;background:#a0a0a0"></div>
<div class="b" style="left:57.00px;top:243.60px;width:101px;height:1px;background:#a0a0a0"></div>
<div class="t" style="left:58.299999999999955px;top:231.66px;width:97px;overflow:hidden;font-size:10.8px;color:#000">ΔΩΜ.ΔΙΚΛ.ΦΑΡΔΥ (ΔΙΠΛΟ)</div>
<div class="b" style="left:160.00px;top:228.60px;width:589px;height:1px;background:#a0a0a0"></div>
<div class="b" style="left:160.00px;top:228.60px;width:1px;height:17px;background:#a0a0a0"></div>
<div class="b" style="left:162.00px;top:243.60px;width:17px;height:1px;background:#a0a0a0"></div>
<div class="b" style="left:179.00px;top:228.60px;width:1px;height:17px;background:#a0a0a0"></div>
<div class="b" style="left:181.00px;top:243.60px;width:17px;height:1px;background:#a0a0a0"></div>
<div class="b" style="left:198.00px;top:228.60px;width:1px;height:17px;background:#a0a0a0"></div>
<div class="b" style="left:200.00px;top:243.60px;width:17px;height:1px;background:#a0a0a0"></div>
<div class="b" style="left:217.00px;top:228.60px;width:1px;height:17px;background:#a0a0a0"></div>
<div class="b" style="left:219.00px;top:243.60px;width:17px;height:1px;background:#a0a0a0"></div>
<div class="b" style="left:236.00px;top:228.60px;width:1px;height:17px;background:#a0a0a0"></div>
<div class="b" style="left:238.00px;top:243.60px;width:17px;height:1px;background:#a0a0a0"></div>
<div class="b" style="left:255.00px;top:228.60px;width:1px;height:17px;background:#a0a0a0"></div>
<div class="b" style="left:257.00px;top:243.60px;width:17px;height:1px;background:#a0a0a0"></div>
<div class="b" style="left:274.00px;top:228.60px;width:1px;height:17px;background:#a0a0a0"></div>
<div class="b" style="left:275.00px;top:243.60px;width:18px;height:1px;background:#a0a0a0"></div>
<div class="b" style="left:293.00px;top:228.60px;width:1px;height:17px;background:#a0a0a0"></div>
<div class="b" style="left:294.00px;top:243.60px;width:18px;height:1px;background:#a0a0a0"></div>
<div class="b" style="left:311.00px;top:228.60px;width:1px;height:17px;background:#a0a0a0"></div>
<div class="b" style="left:313.00px;top:243.60px;width:17px;height:1px;background:#a0a0a0"></div>
<div class="b" style="left:330.00px;top:228.60px;width:1px;height:17px;background:#a0a0a0"></div>
<div class="b" style="left:332.00px;top:243.60px;width:17px;height:1px;background:#a0a0a0"></div>
<div class="b" style="left:349.00px;top:228.60px;width:1px;height:17px;background:#a0a0a0"></div>
<div class="b" style="left:351.00px;top:243.60px;width:17px;height:1px;background:#a0a0a0"></div>
<div class="b" style="left:368.00px;top:228.60px;width:1px;height:17px;background:#a0a0a0"></div>
<div class="b" style="left:370.00px;top:243.60px;width:17px;height:1px;background:#a0a0a0"></div>
<div class="b" style="left:387.00px;top:228.60px;width:1px;height:17px;background:#a0a0a0"></div>
<div class="b" style="left:389.00px;top:243.60px;width:17px;height:1px;background:#a0a0a0"></div>
<div class="b" style="left:406.00px;top:228.60px;width:1px;height:17px;background:#a0a0a0"></div>
<div class="b" style="left:408.00px;top:243.60px;width:17px;height:1px;background:#a0a0a0"></div>
<div class="b" style="left:425.00px;top:228.60px;width:1px;height:17px;background:#a0a0a0"></div>
<div class="b" style="left:427.00px;top:243.60px;width:17px;height:1px;background:#a0a0a0"></div>
<div class="b" style="left:444.00px;top:228.60px;width:1px;height:17px;background:#a0a0a0"></div>
<div class="b" style="left:446.00px;top:243.60px;width:17px;height:1px;background:#a0a0a0"></div>
<div class="b" style="left:463.00px;top:228.60px;width:1px;height:17px;background:#a0a0a0"></div>
<div class="b" style="left:464.00px;top:243.60px;width:18px;height:1px;background:#a0a0a0"></div>
<div class="b" style="left:482.00px;top:228.60px;width:1px;height:17px;background:#a0a0a0"></div>
<div class="b" style="left:483.00px;top:243.60px;width:18px;height:1px;background:#a0a0a0"></div>
<div class="b" style="left:500.00px;top:228.60px;width:1px;height:17px;background:#a0a0a0"></div>
<div class="b" style="left:502.00px;top:243.60px;width:17px;height:1px;background:#a0a0a0"></div>
<div class="b" style="left:519.00px;top:228.60px;width:1px;height:17px;background:#a0a0a0"></div>
<div class="b" style="left:521.00px;top:243.60px;width:17px;height:1px;background:#a0a0a0"></div>
<div class="b" style="left:538.00px;top:228.60px;width:1px;height:17px;background:#a0a0a0"></div>
<div class="b" style="left:540.00px;top:243.60px;width:17px;height:1px;background:#a0a0a0"></div>
<div class="b" style="left:557.00px;top:228.60px;width:1px;height:17px;background:#a0a0a0"></div>
<div class="b" style="left:559.00px;top:243.60px;width:17px;height:1px;background:#a0a0a0"></div>
<div class="b" style="left:576.00px;top:228.60px;width:1px;height:17px;background:#a0a0a0"></div>
<div class="b" style="left:578.00px;top:243.60px;width:17px;height:1px;background:#a0a0a0"></div>
<div class="b" style="left:595.00px;top:228.60px;width:1px;height:17px;background:#a0a0a0"></div>
<div class="b" style="left:597.00px;top:243.60px;width:17px;height:1px;background:#a0a0a0"></div>
<div class="b" style="left:614.00px;top:228.60px;width:1px;height:17px;background:#a0a0a0"></div>
<div class="b" style="left:616.00px;top:243.60px;width:17px;height:1px;background:#a0a0a0"></div>
<div class="b" style="left:633.00px;top:228.60px;width:1px;height:17px;background:#a0a0a0"></div>
<div class="b" style="left:635.00px;top:243.60px;width:17px;height:1px;background:#a0a0a0"></div>
<div class="b" style="left:652.00px;top:228.60px;width:1px;height:17px;background:#a0a0a0"></div>
<div class="b" style="left:653.00px;top:243.60px;width:18px;height:1px;background:#a0a0a0"></div>
<div class="b" style="left:671.00px;top:228.60px;width:1px;height:17px;background:#a0a0a0"></div>
<div class="b" style="left:672.00px;top:243.60px;width:18px;height:1px;background:#a0a0a0"></div>
<div class="b" style="left:689.00px;top:228.60px;width:1px;height:17px;background:#a0a0a0"></div>
<div class="b" style="left:691.00px;top:243.60px;width:17px;height:1px;background:#a0a0a0"></div>
<div class="b" style="left:708.00px;top:228.60px;width:1px;height:17px;background:#a0a0a0"></div>
<div class="b" style="left:710.00px;top:243.60px;width:17px;height:1px;background:#a0a0a0"></div>
<div class="b" style="left:727.00px;top:228.60px;width:1px;height:17px;background:#a0a0a0"></div>
<div class="b" style="left:729.00px;top:243.60px;width:17px;height:1px;background:#a0a0a0"></div>
<div class="b" style="left:748.00px;top:230.60px;width:1px;height:14px;background:#a0a0a0"></div>
<div class="b" style="left:2.00px;top:250.60px;width:51px;height:1px;background:#a0a0a0"></div>
<div class="b" style="left:2.00px;top:250.60px;width:1px;height:18px;background:#a0a0a0"></div>
<div class="b" style="left:51.00px;top:252.60px;width:1px;height:15px;background:#a0a0a0"></div>
<div class="b" style="left:3.00px;top:266.60px;width:49px;height:1px;background:#a0a0a0"></div>
<div class="t" style="left:5.50px;top:254.43px;font-size:11px;color:#000;font-weight:normal;">202</div>
<div class="b" style="left:55.00px;top:250.60px;width:104px;height:1px;background:#a0a0a0"></div>
<div class="b" style="left:55.00px;top:250.60px;width:1px;height:18px;background:#a0a0a0"></div>
<div class="b" style="left:157.00px;top:252.60px;width:1px;height:15px;background:#a0a0a0"></div>
<div class="b" style="left:57.00px;top:266.60px;width:101px;height:1px;background:#a0a0a0"></div>
<div class="t" style="left:58.299999999999955px;top:254.33px;width:97px;overflow:hidden;font-size:10.8px;color:#000">ΔΩΜ.ΔΙΚΛ. (Γ)</div>
<div class="b" style="left:160.00px;top:250.60px;width:589px;height:1px;background:#a0a0a0"></div>
<div class="b" style="left:160.00px;top:250.60px;width:1px;height:18px;background:#a0a0a0"></div>
<div class="b" style="left:162.00px;top:266.60px;width:17px;height:1px;background:#a0a0a0"></div>
<div class="b" style="left:179.00px;top:250.60px;width:1px;height:18px;background:#a0a0a0"></div>
<div class="b" style="left:181.00px;top:266.60px;width:17px;height:1px;background:#a0a0a0"></div>
<div class="b" style="left:198.00px;top:250.60px;width:1px;height:18px;background:#a0a0a0"></div>
<div class="b" style="left:200.00px;top:266.60px;width:17px;height:1px;background:#a0a0a0"></div>
<div class="b" style="left:217.00px;top:250.60px;width:1px;height:18px;background:#a0a0a0"></div>
<div class="b" style="left:219.00px;top:266.60px;width:17px;height:1px;background:#a0a0a0"></div>
<div class="b" style="left:236.00px;top:250.60px;width:1px;height:18px;background:#a0a0a0"></div>
<div class="b" style="left:238.00px;top:266.60px;width:17px;height:1px;background:#a0a0a0"></div>
<div class="b" style="left:255.00px;top:250.60px;width:1px;height:18px;background:#a0a0a0"></div>
<div class="b" style="left:257.00px;top:266.60px;width:17px;height:1px;background:#a0a0a0"></div>
<div class="b" style="left:274.00px;top:250.60px;width:1px;height:18px;background:#a0a0a0"></div>
<div class="b" style="left:275.00px;top:266.60px;width:18px;height:1px;background:#a0a0a0"></div>
<div class="b" style="left:293.00px;top:250.60px;width:1px;height:18px;background:#a0a0a0"></div>
<div class="b" style="left:294.00px;top:266.60px;width:18px;height:1px;background:#a0a0a0"></div>
<div class="b" style="left:311.00px;top:250.60px;width:1px;height:18px;background:#a0a0a0"></div>
<div class="b" style="left:313.00px;top:266.60px;width:17px;height:1px;background:#a0a0a0"></div>
<div class="b" style="left:330.00px;top:250.60px;width:1px;height:18px;background:#a0a0a0"></div>
<div class="b" style="left:332.00px;top:266.60px;width:17px;height:1px;background:#a0a0a0"></div>
<div class="b" style="left:349.00px;top:250.60px;width:1px;height:18px;background:#a0a0a0"></div>
<div class="b" style="left:351.00px;top:266.60px;width:17px;height:1px;background:#a0a0a0"></div>
<div class="b" style="left:368.00px;top:250.60px;width:1px;height:18px;background:#a0a0a0"></div>
<div class="b" style="left:370.00px;top:266.60px;width:17px;height:1px;background:#a0a0a0"></div>
<div class="b" style="left:387.00px;top:250.60px;width:1px;height:18px;background:#a0a0a0"></div>
<div class="b" style="left:389.00px;top:266.60px;width:17px;height:1px;background:#a0a0a0"></div>
<div class="b" style="left:406.00px;top:250.60px;width:1px;height:18px;background:#a0a0a0"></div>
<div class="b" style="left:408.00px;top:266.60px;width:17px;height:1px;background:#a0a0a0"></div>
<div class="b" style="left:425.00px;top:250.60px;width:1px;height:18px;background:#a0a0a0"></div>
<div class="b" style="left:427.00px;top:266.60px;width:17px;height:1px;background:#a0a0a0"></div>
<div class="b" style="left:444.00px;top:250.60px;width:1px;height:18px;background:#a0a0a0"></div>
<div class="b" style="left:446.00px;top:266.60px;width:17px;height:1px;background:#a0a0a0"></div>
<div class="b" style="left:463.00px;top:250.60px;width:1px;height:18px;background:#a0a0a0"></div>
<div class="b" style="left:464.00px;top:266.60px;width:18px;height:1px;background:#a0a0a0"></div>
<div class="b" style="left:482.00px;top:250.60px;width:1px;height:18px;background:#a0a0a0"></div>
<div class="b" style="left:483.00px;top:266.60px;width:18px;height:1px;background:#a0a0a0"></div>
<div class="b" style="left:500.00px;top:250.60px;width:1px;height:18px;background:#a0a0a0"></div>
<div class="b" style="left:502.00px;top:266.60px;width:17px;height:1px;background:#a0a0a0"></div>
<div class="b" style="left:519.00px;top:250.60px;width:1px;height:18px;background:#a0a0a0"></div>
<div class="b" style="left:521.00px;top:266.60px;width:17px;height:1px;background:#a0a0a0"></div>
<div class="b" style="left:538.00px;top:250.60px;width:1px;height:18px;background:#a0a0a0"></div>
<div class="b" style="left:540.00px;top:266.60px;width:17px;height:1px;background:#a0a0a0"></div>
<div class="b" style="left:557.00px;top:250.60px;width:1px;height:18px;background:#a0a0a0"></div>
<div class="b" style="left:559.00px;top:266.60px;width:17px;height:1px;background:#a0a0a0"></div>
<div class="b" style="left:576.00px;top:250.60px;width:1px;height:18px;background:#a0a0a0"></div>
<div class="b" style="left:578.00px;top:266.60px;width:17px;height:1px;background:#a0a0a0"></div>
<div class="b" style="left:595.00px;top:250.60px;width:1px;height:18px;background:#a0a0a0"></div>
<div class="b" style="left:597.00px;top:266.60px;width:17px;height:1px;background:#a0a0a0"></div>
<div class="b" style="left:614.00px;top:250.60px;width:1px;height:18px;background:#a0a0a0"></div>
<div class="b" style="left:616.00px;top:266.60px;width:17px;height:1px;background:#a0a0a0"></div>
<div class="b" style="left:633.00px;top:250.60px;width:1px;height:18px;background:#a0a0a0"></div>
<div class="b" style="left:635.00px;top:266.60px;width:17px;height:1px;background:#a0a0a0"></div>
<div class="b" style="left:652.00px;top:250.60px;width:1px;height:18px;background:#a0a0a0"></div>
<div class="b" style="left:653.00px;top:266.60px;width:18px;height:1px;background:#a0a0a0"></div>
<div class="b" style="left:671.00px;top:250.60px;width:1px;height:18px;background:#a0a0a0"></div>
<div class="b" style="left:672.00px;top:266.60px;width:18px;height:1px;background:#a0a0a0"></div>
<div class="b" style="left:689.00px;top:250.60px;width:1px;height:18px;background:#a0a0a0"></div>
<div class="b" style="left:691.00px;top:266.60px;width:17px;height:1px;background:#a0a0a0"></div>
<div class="b" style="left:708.00px;top:250.60px;width:1px;height:18px;background:#a0a0a0"></div>
<div class="b" style="left:710.00px;top:266.60px;width:17px;height:1px;background:#a0a0a0"></div>
<div class="b" style="left:727.00px;top:250.60px;width:1px;height:18px;background:#a0a0a0"></div>
<div class="b" style="left:729.00px;top:266.60px;width:17px;height:1px;background:#a0a0a0"></div>
<div class="b" style="left:748.00px;top:252.60px;width:1px;height:15px;background:#a0a0a0"></div>
</div>
<div class="b" style="left:1344px;top:296px;width:15px;height:15px;background:#fff;border:1px solid #a0a0a0"></div>
<svg style="left:1344px;top:296px" width="15" height="15" viewBox="0 0 15 15"><path d="M4 8.8 L7.5 5.3 L11 8.8 Z" fill="#606060"/></svg>
<div class="b" style="left:1344px;top:311px;width:15px;height:209px;background:#fff;border:1px solid #a0a0a0"></div>
<div class="b" style="left:1344px;top:520px;width:15px;height:147px;background:#f0f0f0"></div>
<div class="b" style="left:1344px;top:667px;width:15px;height:15px;background:#fff;border:1px solid #a0a0a0"></div>
<svg style="left:1344px;top:667px" width="15" height="15" viewBox="0 0 15 15"><path d="M4 6 L7.5 9.5 L11 6 Z" fill="#606060"/></svg>
<div class="b" style="left:593px;top:684px;width:751px;height:16px;background:#f0f0f0"></div>
<div class="b" style="left:596px;top:686px;width:14px;height:13px;background:#fff;border:1px solid #a0a0a0"></div>
<svg style="left:596px;top:686px" width="15" height="14" viewBox="0 0 15 14"><path d="M8.5 3.5 L5 7 L8.5 10.5 Z" fill="#606060"/></svg>
<div class="b" style="left:610px;top:685px;width:679px;height:14px;background:#fff;border:1px solid #a0a0a0"></div>
<div class="b" style="left:1326px;top:685px;width:15px;height:15px;background:#fff;border:1px solid #a0a0a0"></div>
<svg style="left:1326px;top:686px" width="15" height="14" viewBox="0 0 15 14"><path d="M5.5 3.5 L9 7 L5.5 10.5 Z" fill="#606060"/></svg>
<div class="b" style="left:1343px;top:684px;width:17px;height:17px;background:#c4c4c8"></div>
<div class="b" style="left:0px;top:704px;width:1365px;height:1px;background:#ffffff"></div>
<div class="b" style="left:0px;top:706px;width:1365px;height:1px;background:#cfcfcf"></div>
<div class="b" style="left:0px;top:707px;width:1365px;height:21px;background:#f0f0f0"></div>
<div class="t" style="left:7.30px;top:712.23px;font-size:11.9px;color:#444;font-weight:normal;">Προβολή φόρμας</div>
<div class="t" style="left:1134.40px;top:710.78px;font-size:11.6px;color:#444;font-weight:normal;">Κλείδωμα αριθμών</div>
<div class="b" style="left:1251px;top:707px;width:38px;height:21px;background:#c6c6c6"></div>
<svg style="left:1250px;top:706px" width="115" height="22" viewBox="1250 706 115 22">
<g fill="none" stroke="#595959" stroke-width="1.1">
<rect x="1263.5" y="710.4" width="13.2" height="12.2"/>
<rect x="1301.5" y="710.4" width="13" height="12.2"/>
<path d="M1301.5 713.2 H1314.5 M1305.2 710.4 V722.6"/>
<path d="M1307 716.5 H1309 M1310.6 716.5 H1312.8 M1307 719.4 H1309 M1310.6 719.4 H1312.8"/>
<path d="M1265.2 716.6 H1269 M1265.2 719.6 H1269"/>
<path d="M1339.8 710 V717.2 H1344 Z"/>
<rect x="1339.9" y="719.3" width="13" height="3.2"/>
</g>
<g fill="#595959">
<rect x="1263.5" y="710.2" width="13.2" height="3.2"/>
<rect x="1270.2" y="716" width="4.8" height="1.9"/><rect x="1270.2" y="719" width="4.8" height="1.9"/>
<path d="M1343.6 716.4 L1350.4 709.6 L1352.3 711.5 L1345.5 718.3 L1343.2 718.8 Z"/>
<rect x="1342" y="719.3" width="0.9" height="1.4"/><rect x="1344.5" y="719.3" width="0.9" height="1.4"/><rect x="1347" y="719.3" width="0.9" height="1.4"/><rect x="1349.5" y="719.3" width="0.9" height="1.4"/>
</g>
</svg>
</body></html>
